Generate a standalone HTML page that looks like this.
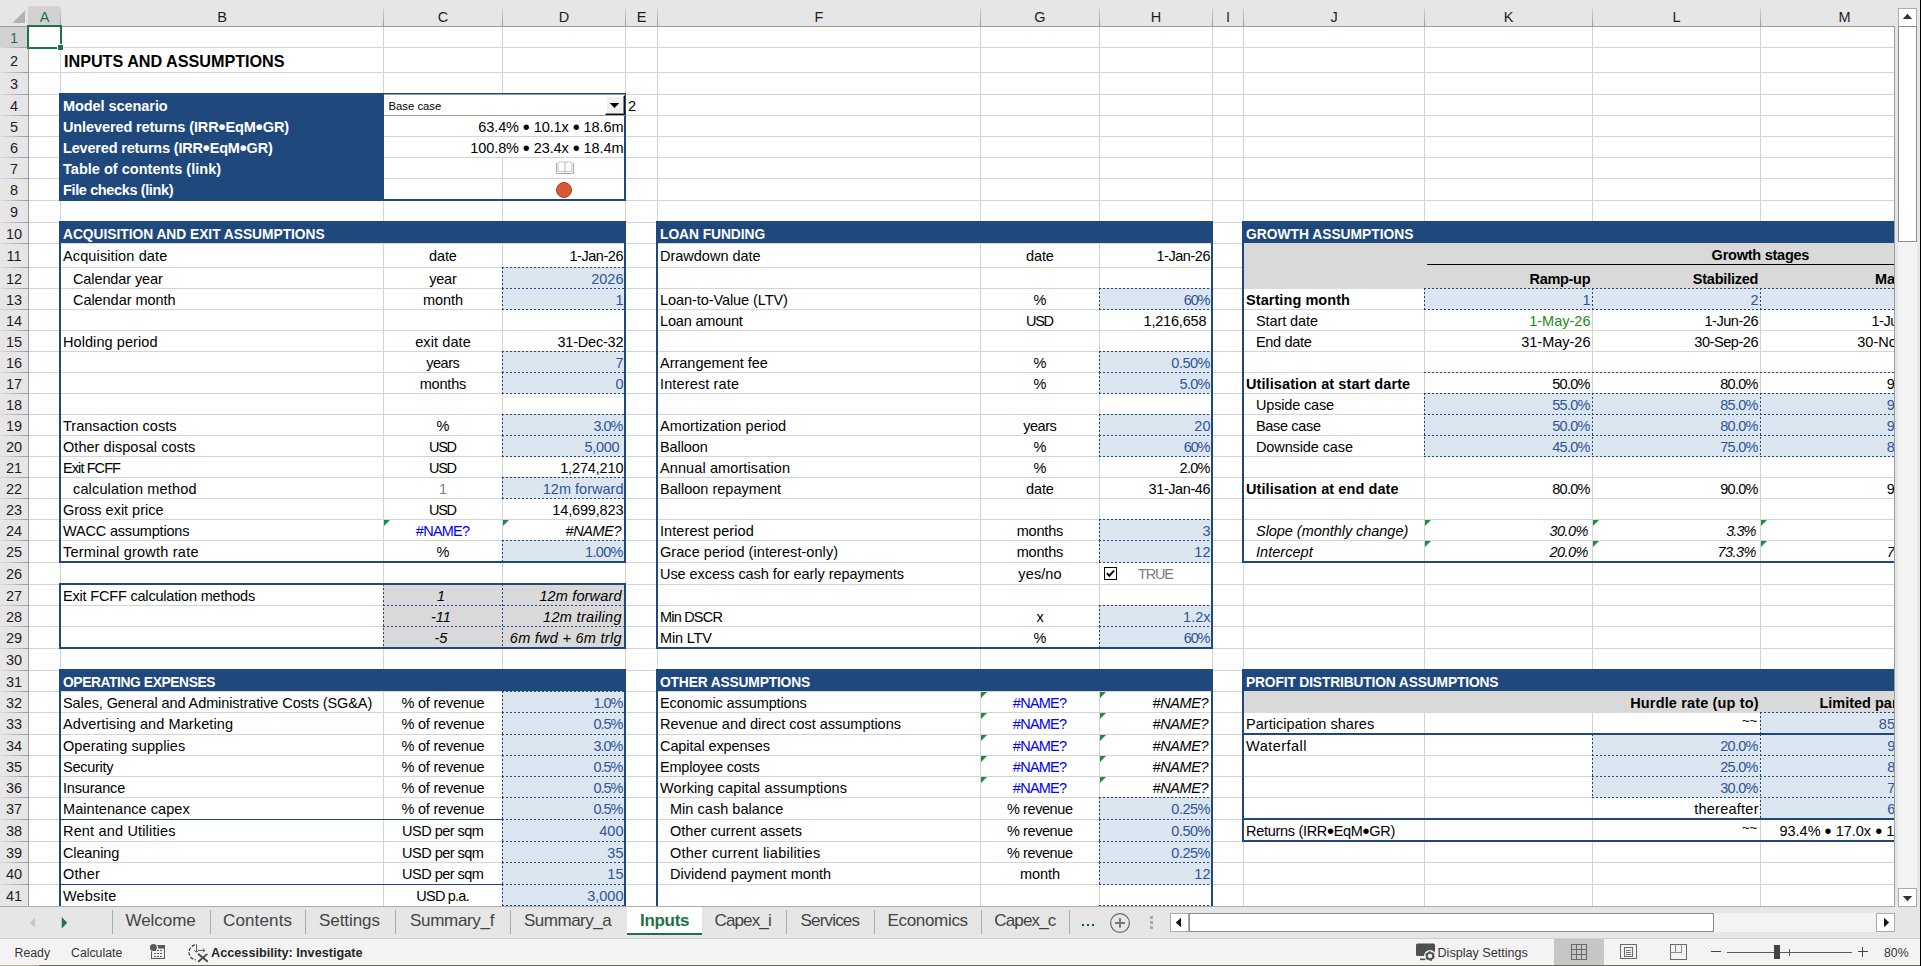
<!DOCTYPE html>
<html><head><meta charset="utf-8"><title>Inputs</title><style>
html,body{margin:0;padding:0;}
body{width:1921px;height:966px;position:relative;overflow:hidden;background:#fff;font-family:"Liberation Sans",sans-serif;font-size:14.5px;color:#000;}
#sheet{position:absolute;left:0;top:0;width:1894px;height:906px;overflow:hidden;}
#sheet div,#sheet svg,#hd div,#hd svg,#ch div,#ch svg,#sel div{position:absolute;}
.t{line-height:18px;height:18px;white-space:pre;overflow:visible;}
.b{font-weight:bold;}
.i{font-style:italic;}
.bu{font-size:1.38em;line-height:0;position:relative;top:2px;}
</style></head>
<body>
<div id="sheet">
<div style="left:60px;top:27px;width:1px;height:879px;background:#D4D4D4;"></div>
<div style="left:383px;top:27px;width:1px;height:879px;background:#D4D4D4;"></div>
<div style="left:502px;top:27px;width:1px;height:879px;background:#D4D4D4;"></div>
<div style="left:625px;top:27px;width:1px;height:879px;background:#D4D4D4;"></div>
<div style="left:657px;top:27px;width:1px;height:879px;background:#D4D4D4;"></div>
<div style="left:980px;top:27px;width:1px;height:879px;background:#D4D4D4;"></div>
<div style="left:1099px;top:27px;width:1px;height:879px;background:#D4D4D4;"></div>
<div style="left:1212px;top:27px;width:1px;height:879px;background:#D4D4D4;"></div>
<div style="left:1243px;top:27px;width:1px;height:879px;background:#D4D4D4;"></div>
<div style="left:1424px;top:27px;width:1px;height:879px;background:#D4D4D4;"></div>
<div style="left:1592px;top:27px;width:1px;height:879px;background:#D4D4D4;"></div>
<div style="left:1760px;top:27px;width:1px;height:879px;background:#D4D4D4;"></div>
<div style="left:29px;top:47px;width:1865px;height:1px;background:#D4D4D4;"></div>
<div style="left:29px;top:72px;width:1865px;height:1px;background:#D4D4D4;"></div>
<div style="left:29px;top:94px;width:1865px;height:1px;background:#D4D4D4;"></div>
<div style="left:29px;top:115px;width:1865px;height:1px;background:#D4D4D4;"></div>
<div style="left:29px;top:136px;width:1865px;height:1px;background:#D4D4D4;"></div>
<div style="left:29px;top:157px;width:1865px;height:1px;background:#D4D4D4;"></div>
<div style="left:29px;top:178px;width:1865px;height:1px;background:#D4D4D4;"></div>
<div style="left:29px;top:200px;width:1865px;height:1px;background:#D4D4D4;"></div>
<div style="left:29px;top:222px;width:1865px;height:1px;background:#D4D4D4;"></div>
<div style="left:29px;top:243px;width:1865px;height:1px;background:#D4D4D4;"></div>
<div style="left:29px;top:267px;width:1865px;height:1px;background:#D4D4D4;"></div>
<div style="left:29px;top:288px;width:1865px;height:1px;background:#D4D4D4;"></div>
<div style="left:29px;top:309px;width:1865px;height:1px;background:#D4D4D4;"></div>
<div style="left:29px;top:330px;width:1865px;height:1px;background:#D4D4D4;"></div>
<div style="left:29px;top:351px;width:1865px;height:1px;background:#D4D4D4;"></div>
<div style="left:29px;top:372px;width:1865px;height:1px;background:#D4D4D4;"></div>
<div style="left:29px;top:393px;width:1865px;height:1px;background:#D4D4D4;"></div>
<div style="left:29px;top:414px;width:1865px;height:1px;background:#D4D4D4;"></div>
<div style="left:29px;top:435px;width:1865px;height:1px;background:#D4D4D4;"></div>
<div style="left:29px;top:456px;width:1865px;height:1px;background:#D4D4D4;"></div>
<div style="left:29px;top:477px;width:1865px;height:1px;background:#D4D4D4;"></div>
<div style="left:29px;top:498px;width:1865px;height:1px;background:#D4D4D4;"></div>
<div style="left:29px;top:519px;width:1865px;height:1px;background:#D4D4D4;"></div>
<div style="left:29px;top:540px;width:1865px;height:1px;background:#D4D4D4;"></div>
<div style="left:29px;top:562px;width:1865px;height:1px;background:#D4D4D4;"></div>
<div style="left:29px;top:584px;width:1865px;height:1px;background:#D4D4D4;"></div>
<div style="left:29px;top:605px;width:1865px;height:1px;background:#D4D4D4;"></div>
<div style="left:29px;top:626px;width:1865px;height:1px;background:#D4D4D4;"></div>
<div style="left:29px;top:648px;width:1865px;height:1px;background:#D4D4D4;"></div>
<div style="left:29px;top:670px;width:1865px;height:1px;background:#D4D4D4;"></div>
<div style="left:29px;top:691px;width:1865px;height:1px;background:#D4D4D4;"></div>
<div style="left:29px;top:712px;width:1865px;height:1px;background:#D4D4D4;"></div>
<div style="left:29px;top:734px;width:1865px;height:1px;background:#D4D4D4;"></div>
<div style="left:29px;top:755px;width:1865px;height:1px;background:#D4D4D4;"></div>
<div style="left:29px;top:776px;width:1865px;height:1px;background:#D4D4D4;"></div>
<div style="left:29px;top:797px;width:1865px;height:1px;background:#D4D4D4;"></div>
<div style="left:29px;top:819px;width:1865px;height:1px;background:#D4D4D4;"></div>
<div style="left:29px;top:841px;width:1865px;height:1px;background:#D4D4D4;"></div>
<div style="left:29px;top:862px;width:1865px;height:1px;background:#D4D4D4;"></div>
<div style="left:29px;top:884px;width:1865px;height:1px;background:#D4D4D4;"></div>
<div style="left:59px;top:93px;width:325px;height:108px;background:#1F497D;"></div>
<div style="left:384px;top:95px;width:240px;height:104px;background:#fff;"></div>
<div style="left:384px;top:115px;width:240px;height:1px;background:#D4D4D4;"></div>
<div style="left:384px;top:136px;width:240px;height:1px;background:#D4D4D4;"></div>
<div style="left:384px;top:157px;width:240px;height:1px;background:#D4D4D4;"></div>
<div style="left:384px;top:178px;width:240px;height:1px;background:#D4D4D4;"></div>
<div style="left:502px;top:158px;width:1px;height:41px;background:#D4D4D4;"></div>
<div style="left:384px;top:93px;width:242px;height:2px;background:#1F497D;"></div>
<div style="left:624px;top:93px;width:2px;height:108px;background:#1F497D;"></div>
<div style="left:384px;top:199px;width:242px;height:2px;background:#1F497D;"></div>
<div class="t b" style="left:63.00px;top:96.98px;width:600px;text-align:left;color:#fff;letter-spacing:-0.065px;">Model scenario</div>
<div class="t b" style="left:63.00px;top:117.98px;width:600px;text-align:left;color:#fff;letter-spacing:-0.106px;">Unlevered returns (IRR<span class="bu">•</span>EqM<span class="bu">•</span>GR)</div>
<div class="t b" style="left:63.00px;top:138.98px;width:600px;text-align:left;color:#fff;letter-spacing:-0.179px;">Levered returns (IRR<span class="bu">•</span>EqM<span class="bu">•</span>GR)</div>
<div class="t b" style="left:63.00px;top:159.98px;width:600px;text-align:left;color:#fff;letter-spacing:0.018px;">Table of contents (link)</div>
<div class="t b" style="left:63.00px;top:180.98px;width:600px;text-align:left;color:#fff;letter-spacing:-0.372px;">File checks (link)</div>
<div class="t " style="left:223.41px;top:117.98px;width:400px;text-align:right;letter-spacing:-0.091px;">63.4% <span class="bu">•</span> 10.1x <span class="bu">•</span> 18.6m</div>
<div class="t " style="left:223.41px;top:138.98px;width:400px;text-align:right;letter-spacing:-0.090px;">100.8% <span class="bu">•</span> 23.4x <span class="bu">•</span> 18.4m</div>
<div class="t " style="left:628.00px;top:96.98px;width:600px;text-align:left;">2</div>
<div style="left:384px;top:94px;width:241px;height:1px;background:#98A1B0;"></div>
<div style="left:384px;top:95px;width:241px;height:20px;background:#fff;"></div>
<div style="left:384px;top:115px;width:241px;height:1px;background:#A0A0A0;"></div>
<div style="left:605px;top:95px;width:20px;height:20px;background:#F0F0F0;border-right:1px solid #111;border-bottom:1px solid #111;border-left:1px solid #fff;border-top:1px solid #fff;box-sizing:border-box;box-shadow:inset -1px -1px 0 #8A8A8A, inset 1px 1px 0 #fff;"></div>
<svg style="left:609px;top:102px" width="11" height="7" viewBox="0 0 11 7"><path d="M0.7 1 L10.3 1 L5.5 6 Z" fill="#000"/></svg>
<div class="t " style="left:388.50px;top:96.58px;width:200px;text-align:left;font-size:11.3px;">Base case</div>
<svg style="left:555px;top:160px" width="20" height="16" viewBox="0 0 20 16">
<path d="M1.5 3 V13.5 H18.5 V3" fill="none" stroke="#B4B4B4" stroke-width="1.2"/>
<path d="M3 11.5 V2.6 Q6.5 0.6 10 2.6 Q13.5 0.6 17 2.6 V11.5 Q13.5 10.6 10 12 Q6.5 10.6 3 11.5 Z" fill="#fff" stroke="#C4C4C4" stroke-width="1"/>
<path d="M10 2.6 V12" stroke="#D9A8A8" stroke-width="1"/>
<path d="M5 13.5 H15" stroke="#A8A8A8" stroke-width="1.2"/></svg>
<div style="left:556px;top:182px;width:16px;height:16px;box-sizing:border-box;border-radius:50%;background:#D85933;border:1px solid #A9431F;"></div>
<div style="left:59px;top:221px;width:567px;height:22px;background:#1F497D;"></div>
<div class="t b" style="left:63.00px;top:226.22px;width:700px;text-align:left;color:#fff;font-size:13.8px;letter-spacing:-0.031px;">ACQUISITION AND EXIT ASSUMPTIONS</div>
<div style="left:503px;top:268px;width:123px;height:21px;background:#DCE6F1;"></div>
<div style="left:502px;top:267px;width:124px;height:1px;background:repeating-linear-gradient(90deg,#1F497D 0 2px,transparent 2px 4px);"></div>
<div style="left:502px;top:288px;width:124px;height:1px;background:repeating-linear-gradient(90deg,#1F497D 0 2px,transparent 2px 4px);"></div>
<div style="left:502px;top:267px;width:1px;height:22px;background:repeating-linear-gradient(180deg,#1F497D 0 2px,transparent 2px 4px);"></div>
<div style="left:625px;top:267px;width:1px;height:22px;background:repeating-linear-gradient(180deg,#1F497D 0 2px,transparent 2px 4px);"></div>
<div style="left:503px;top:289px;width:123px;height:21px;background:#DCE6F1;"></div>
<div style="left:502px;top:288px;width:124px;height:1px;background:repeating-linear-gradient(90deg,#1F497D 0 2px,transparent 2px 4px);"></div>
<div style="left:502px;top:309px;width:124px;height:1px;background:repeating-linear-gradient(90deg,#1F497D 0 2px,transparent 2px 4px);"></div>
<div style="left:502px;top:288px;width:1px;height:22px;background:repeating-linear-gradient(180deg,#1F497D 0 2px,transparent 2px 4px);"></div>
<div style="left:625px;top:288px;width:1px;height:22px;background:repeating-linear-gradient(180deg,#1F497D 0 2px,transparent 2px 4px);"></div>
<div style="left:503px;top:352px;width:123px;height:21px;background:#DCE6F1;"></div>
<div style="left:502px;top:351px;width:124px;height:1px;background:repeating-linear-gradient(90deg,#1F497D 0 2px,transparent 2px 4px);"></div>
<div style="left:502px;top:372px;width:124px;height:1px;background:repeating-linear-gradient(90deg,#1F497D 0 2px,transparent 2px 4px);"></div>
<div style="left:502px;top:351px;width:1px;height:22px;background:repeating-linear-gradient(180deg,#1F497D 0 2px,transparent 2px 4px);"></div>
<div style="left:625px;top:351px;width:1px;height:22px;background:repeating-linear-gradient(180deg,#1F497D 0 2px,transparent 2px 4px);"></div>
<div style="left:503px;top:373px;width:123px;height:21px;background:#DCE6F1;"></div>
<div style="left:502px;top:372px;width:124px;height:1px;background:repeating-linear-gradient(90deg,#1F497D 0 2px,transparent 2px 4px);"></div>
<div style="left:502px;top:393px;width:124px;height:1px;background:repeating-linear-gradient(90deg,#1F497D 0 2px,transparent 2px 4px);"></div>
<div style="left:502px;top:372px;width:1px;height:22px;background:repeating-linear-gradient(180deg,#1F497D 0 2px,transparent 2px 4px);"></div>
<div style="left:625px;top:372px;width:1px;height:22px;background:repeating-linear-gradient(180deg,#1F497D 0 2px,transparent 2px 4px);"></div>
<div style="left:503px;top:415px;width:123px;height:21px;background:#DCE6F1;"></div>
<div style="left:502px;top:414px;width:124px;height:1px;background:repeating-linear-gradient(90deg,#1F497D 0 2px,transparent 2px 4px);"></div>
<div style="left:502px;top:435px;width:124px;height:1px;background:repeating-linear-gradient(90deg,#1F497D 0 2px,transparent 2px 4px);"></div>
<div style="left:502px;top:414px;width:1px;height:22px;background:repeating-linear-gradient(180deg,#1F497D 0 2px,transparent 2px 4px);"></div>
<div style="left:625px;top:414px;width:1px;height:22px;background:repeating-linear-gradient(180deg,#1F497D 0 2px,transparent 2px 4px);"></div>
<div style="left:503px;top:436px;width:123px;height:21px;background:#DCE6F1;"></div>
<div style="left:502px;top:435px;width:124px;height:1px;background:repeating-linear-gradient(90deg,#1F497D 0 2px,transparent 2px 4px);"></div>
<div style="left:502px;top:456px;width:124px;height:1px;background:repeating-linear-gradient(90deg,#1F497D 0 2px,transparent 2px 4px);"></div>
<div style="left:502px;top:435px;width:1px;height:22px;background:repeating-linear-gradient(180deg,#1F497D 0 2px,transparent 2px 4px);"></div>
<div style="left:625px;top:435px;width:1px;height:22px;background:repeating-linear-gradient(180deg,#1F497D 0 2px,transparent 2px 4px);"></div>
<div style="left:503px;top:478px;width:123px;height:21px;background:#DCE6F1;"></div>
<div style="left:502px;top:477px;width:124px;height:1px;background:repeating-linear-gradient(90deg,#1F497D 0 2px,transparent 2px 4px);"></div>
<div style="left:502px;top:498px;width:124px;height:1px;background:repeating-linear-gradient(90deg,#1F497D 0 2px,transparent 2px 4px);"></div>
<div style="left:502px;top:477px;width:1px;height:22px;background:repeating-linear-gradient(180deg,#1F497D 0 2px,transparent 2px 4px);"></div>
<div style="left:625px;top:477px;width:1px;height:22px;background:repeating-linear-gradient(180deg,#1F497D 0 2px,transparent 2px 4px);"></div>
<div style="left:503px;top:541px;width:123px;height:22px;background:#DCE6F1;"></div>
<div style="left:502px;top:540px;width:124px;height:1px;background:repeating-linear-gradient(90deg,#1F497D 0 2px,transparent 2px 4px);"></div>
<div style="left:502px;top:562px;width:124px;height:1px;background:repeating-linear-gradient(90deg,#1F497D 0 2px,transparent 2px 4px);"></div>
<div style="left:502px;top:540px;width:1px;height:23px;background:repeating-linear-gradient(180deg,#1F497D 0 2px,transparent 2px 4px);"></div>
<div style="left:625px;top:540px;width:1px;height:23px;background:repeating-linear-gradient(180deg,#1F497D 0 2px,transparent 2px 4px);"></div>
<div class="t " style="left:63.00px;top:246.98px;width:600px;text-align:left;letter-spacing:0.123px;">Acquisition date</div>
<div class="t " style="left:242.92px;top:246.98px;width:400px;text-align:center;letter-spacing:-0.152px;">date</div>
<div class="t " style="left:223.03px;top:246.98px;width:400px;text-align:right;letter-spacing:-0.466px;">1-Jan-26</div>
<div class="t " style="left:73.00px;top:269.98px;width:600px;text-align:left;letter-spacing:-0.108px;">Calendar year</div>
<div class="t " style="left:242.89px;top:269.98px;width:400px;text-align:center;letter-spacing:-0.226px;">year</div>
<div class="t " style="left:223.50px;top:269.98px;width:400px;text-align:right;color:#2F5597;">2026</div>
<div class="t " style="left:73.00px;top:290.98px;width:600px;text-align:left;letter-spacing:-0.054px;">Calendar month</div>
<div class="t " style="left:242.96px;top:290.98px;width:400px;text-align:center;letter-spacing:-0.084px;">month</div>
<div class="t " style="left:223.50px;top:290.98px;width:400px;text-align:right;color:#2F5597;">1</div>
<div class="t " style="left:63.00px;top:332.98px;width:600px;text-align:left;letter-spacing:0.074px;">Holding period</div>
<div class="t " style="left:243.05px;top:332.98px;width:400px;text-align:center;letter-spacing:0.106px;">exit date</div>
<div class="t " style="left:223.28px;top:332.98px;width:400px;text-align:right;letter-spacing:-0.217px;">31-Dec-32</div>
<div class="t " style="left:242.77px;top:353.98px;width:400px;text-align:center;letter-spacing:-0.452px;">years</div>
<div class="t " style="left:223.50px;top:353.98px;width:400px;text-align:right;color:#2F5597;">7</div>
<div class="t " style="left:242.92px;top:374.98px;width:400px;text-align:center;letter-spacing:-0.170px;">months</div>
<div class="t " style="left:223.50px;top:374.98px;width:400px;text-align:right;color:#2F5597;">0</div>
<div class="t " style="left:63.00px;top:416.98px;width:600px;text-align:left;letter-spacing:0.023px;">Transaction costs</div>
<div class="t " style="left:243.00px;top:416.98px;width:400px;text-align:center;">%</div>
<div class="t " style="left:222.45px;top:416.98px;width:400px;text-align:right;color:#2F5597;letter-spacing:-1.052px;">3.0%</div>
<div class="t " style="left:63.00px;top:437.98px;width:600px;text-align:left;letter-spacing:0.044px;">Other disposal costs</div>
<div class="t " style="left:242.40px;top:437.98px;width:400px;text-align:center;letter-spacing:-1.200px;">USD</div>
<div class="t " style="left:222.84px;top:437.98px;width:400px;text-align:right;color:#2F5597;letter-spacing:-0.330px;">5,000 </div>
<div class="t " style="left:63.00px;top:458.98px;width:600px;text-align:left;letter-spacing:-0.911px;">Exit FCFF</div>
<div class="t " style="left:242.40px;top:458.98px;width:400px;text-align:center;letter-spacing:-1.200px;">USD</div>
<div class="t " style="left:223.34px;top:458.98px;width:400px;text-align:right;letter-spacing:-0.155px;">1,274,210</div>
<div class="t " style="left:73.00px;top:479.98px;width:600px;text-align:left;letter-spacing:0.151px;">calculation method</div>
<div class="t " style="left:243.00px;top:479.98px;width:400px;text-align:center;color:#808080;">1</div>
<div class="t " style="left:223.52px;top:479.98px;width:400px;text-align:right;color:#2F5597;letter-spacing:0.018px;">12m forward</div>
<div class="t " style="left:63.00px;top:500.98px;width:600px;text-align:left;letter-spacing:-0.017px;">Gross exit price</div>
<div class="t " style="left:242.40px;top:500.98px;width:400px;text-align:center;letter-spacing:-1.200px;">USD</div>
<div class="t " style="left:223.34px;top:500.98px;width:400px;text-align:right;letter-spacing:-0.156px;">14,699,823</div>
<div class="t " style="left:63.00px;top:521.98px;width:600px;text-align:left;letter-spacing:-0.183px;">WACC assumptions</div>
<div class="t " style="left:242.62px;top:521.98px;width:400px;text-align:center;color:#0000FF;letter-spacing:-0.752px;">#NAME?</div>
<div class="t i" style="left:224.68px;top:521.98px;width:400px;text-align:right;letter-spacing:-0.412px;">#NAME? </div>
<div style="left:384px;top:520px;width:0;height:0;border-top:6px solid #1E8E3E;border-right:6px solid transparent;"></div>
<div style="left:503px;top:520px;width:0;height:0;border-top:6px solid #1E8E3E;border-right:6px solid transparent;"></div>
<div class="t " style="left:63.00px;top:542.98px;width:600px;text-align:left;letter-spacing:0.216px;">Terminal growth rate</div>
<div class="t " style="left:243.00px;top:542.98px;width:400px;text-align:center;">%</div>
<div class="t " style="left:222.84px;top:542.98px;width:400px;text-align:right;color:#2F5597;letter-spacing:-0.655px;">1.00%</div>
<div style="left:59px;top:561px;width:567px;height:2px;background:#1F497D;"></div>
<div style="left:59px;top:242px;width:2px;height:321px;background:#1F497D;"></div>
<div style="left:624px;top:242px;width:2px;height:321px;background:#1F497D;"></div>
<div style="left:384px;top:585px;width:242px;height:64px;background:#D9D9D9;"></div>
<div style="left:383px;top:584px;width:243px;height:1px;background:repeating-linear-gradient(90deg,#1F497D 0 2px,transparent 2px 4px);"></div>
<div style="left:383px;top:605px;width:243px;height:1px;background:repeating-linear-gradient(90deg,#1F497D 0 2px,transparent 2px 4px);"></div>
<div style="left:383px;top:626px;width:243px;height:1px;background:repeating-linear-gradient(90deg,#1F497D 0 2px,transparent 2px 4px);"></div>
<div style="left:383px;top:648px;width:243px;height:1px;background:repeating-linear-gradient(90deg,#1F497D 0 2px,transparent 2px 4px);"></div>
<div style="left:383px;top:584px;width:1px;height:65px;background:repeating-linear-gradient(180deg,#1F497D 0 2px,transparent 2px 4px);"></div>
<div style="left:502px;top:584px;width:1px;height:65px;background:repeating-linear-gradient(180deg,#1F497D 0 2px,transparent 2px 4px);"></div>
<div style="left:625px;top:584px;width:1px;height:65px;background:repeating-linear-gradient(180deg,#1F497D 0 2px,transparent 2px 4px);"></div>
<div class="t " style="left:63.00px;top:586.98px;width:600px;text-align:left;letter-spacing:-0.187px;">Exit FCFF calculation methods</div>
<div class="t i" style="left:243.00px;top:586.98px;width:400px;text-align:center;">1 </div>
<div class="t i" style="left:225.80px;top:586.98px;width:400px;text-align:right;letter-spacing:0.148px;">12m forward </div>
<div class="t i" style="left:243.00px;top:607.98px;width:400px;text-align:center;">-11 </div>
<div class="t i" style="left:226.12px;top:607.98px;width:400px;text-align:right;letter-spacing:0.311px;">12m trailing </div>
<div class="t i" style="left:243.00px;top:628.98px;width:400px;text-align:center;">-5 </div>
<div class="t i" style="left:226.05px;top:628.98px;width:400px;text-align:right;letter-spacing:0.273px;">6m fwd + 6m trlg </div>
<div style="left:59px;top:583px;width:567px;height:2px;background:#1F497D;"></div>
<div style="left:59px;top:647px;width:567px;height:2px;background:#1F497D;"></div>
<div style="left:59px;top:583px;width:2px;height:66px;background:#1F497D;"></div>
<div style="left:624px;top:583px;width:2px;height:66px;background:#1F497D;"></div>
<div style="left:59px;top:669px;width:567px;height:22px;background:#1F497D;"></div>
<div class="t b" style="left:63.00px;top:674.22px;width:700px;text-align:left;color:#fff;font-size:13.8px;letter-spacing:-0.397px;">OPERATING EXPENSES</div>
<div style="left:61px;top:819px;width:442px;height:1px;background:#1F497D;"></div>
<div style="left:61px;top:884px;width:442px;height:1px;background:#1F497D;"></div>
<div style="left:503px;top:692px;width:123px;height:21px;background:#DCE6F1;"></div>
<div style="left:502px;top:691px;width:124px;height:1px;background:repeating-linear-gradient(90deg,#1F497D 0 2px,transparent 2px 4px);"></div>
<div style="left:502px;top:712px;width:124px;height:1px;background:repeating-linear-gradient(90deg,#1F497D 0 2px,transparent 2px 4px);"></div>
<div style="left:502px;top:691px;width:1px;height:22px;background:repeating-linear-gradient(180deg,#1F497D 0 2px,transparent 2px 4px);"></div>
<div style="left:625px;top:691px;width:1px;height:22px;background:repeating-linear-gradient(180deg,#1F497D 0 2px,transparent 2px 4px);"></div>
<div style="left:503px;top:713px;width:123px;height:22px;background:#DCE6F1;"></div>
<div style="left:502px;top:712px;width:124px;height:1px;background:repeating-linear-gradient(90deg,#1F497D 0 2px,transparent 2px 4px);"></div>
<div style="left:502px;top:734px;width:124px;height:1px;background:repeating-linear-gradient(90deg,#1F497D 0 2px,transparent 2px 4px);"></div>
<div style="left:502px;top:712px;width:1px;height:23px;background:repeating-linear-gradient(180deg,#1F497D 0 2px,transparent 2px 4px);"></div>
<div style="left:625px;top:712px;width:1px;height:23px;background:repeating-linear-gradient(180deg,#1F497D 0 2px,transparent 2px 4px);"></div>
<div style="left:503px;top:735px;width:123px;height:21px;background:#DCE6F1;"></div>
<div style="left:502px;top:734px;width:124px;height:1px;background:repeating-linear-gradient(90deg,#1F497D 0 2px,transparent 2px 4px);"></div>
<div style="left:502px;top:755px;width:124px;height:1px;background:repeating-linear-gradient(90deg,#1F497D 0 2px,transparent 2px 4px);"></div>
<div style="left:502px;top:734px;width:1px;height:22px;background:repeating-linear-gradient(180deg,#1F497D 0 2px,transparent 2px 4px);"></div>
<div style="left:625px;top:734px;width:1px;height:22px;background:repeating-linear-gradient(180deg,#1F497D 0 2px,transparent 2px 4px);"></div>
<div style="left:503px;top:756px;width:123px;height:21px;background:#DCE6F1;"></div>
<div style="left:502px;top:755px;width:124px;height:1px;background:repeating-linear-gradient(90deg,#1F497D 0 2px,transparent 2px 4px);"></div>
<div style="left:502px;top:776px;width:124px;height:1px;background:repeating-linear-gradient(90deg,#1F497D 0 2px,transparent 2px 4px);"></div>
<div style="left:502px;top:755px;width:1px;height:22px;background:repeating-linear-gradient(180deg,#1F497D 0 2px,transparent 2px 4px);"></div>
<div style="left:625px;top:755px;width:1px;height:22px;background:repeating-linear-gradient(180deg,#1F497D 0 2px,transparent 2px 4px);"></div>
<div style="left:503px;top:777px;width:123px;height:21px;background:#DCE6F1;"></div>
<div style="left:502px;top:776px;width:124px;height:1px;background:repeating-linear-gradient(90deg,#1F497D 0 2px,transparent 2px 4px);"></div>
<div style="left:502px;top:797px;width:124px;height:1px;background:repeating-linear-gradient(90deg,#1F497D 0 2px,transparent 2px 4px);"></div>
<div style="left:502px;top:776px;width:1px;height:22px;background:repeating-linear-gradient(180deg,#1F497D 0 2px,transparent 2px 4px);"></div>
<div style="left:625px;top:776px;width:1px;height:22px;background:repeating-linear-gradient(180deg,#1F497D 0 2px,transparent 2px 4px);"></div>
<div style="left:503px;top:798px;width:123px;height:22px;background:#DCE6F1;"></div>
<div style="left:502px;top:797px;width:124px;height:1px;background:repeating-linear-gradient(90deg,#1F497D 0 2px,transparent 2px 4px);"></div>
<div style="left:502px;top:819px;width:124px;height:1px;background:repeating-linear-gradient(90deg,#1F497D 0 2px,transparent 2px 4px);"></div>
<div style="left:502px;top:797px;width:1px;height:23px;background:repeating-linear-gradient(180deg,#1F497D 0 2px,transparent 2px 4px);"></div>
<div style="left:625px;top:797px;width:1px;height:23px;background:repeating-linear-gradient(180deg,#1F497D 0 2px,transparent 2px 4px);"></div>
<div style="left:503px;top:820px;width:123px;height:22px;background:#DCE6F1;"></div>
<div style="left:502px;top:819px;width:124px;height:1px;background:repeating-linear-gradient(90deg,#1F497D 0 2px,transparent 2px 4px);"></div>
<div style="left:502px;top:841px;width:124px;height:1px;background:repeating-linear-gradient(90deg,#1F497D 0 2px,transparent 2px 4px);"></div>
<div style="left:502px;top:819px;width:1px;height:23px;background:repeating-linear-gradient(180deg,#1F497D 0 2px,transparent 2px 4px);"></div>
<div style="left:625px;top:819px;width:1px;height:23px;background:repeating-linear-gradient(180deg,#1F497D 0 2px,transparent 2px 4px);"></div>
<div style="left:503px;top:842px;width:123px;height:21px;background:#DCE6F1;"></div>
<div style="left:502px;top:841px;width:124px;height:1px;background:repeating-linear-gradient(90deg,#1F497D 0 2px,transparent 2px 4px);"></div>
<div style="left:502px;top:862px;width:124px;height:1px;background:repeating-linear-gradient(90deg,#1F497D 0 2px,transparent 2px 4px);"></div>
<div style="left:502px;top:841px;width:1px;height:22px;background:repeating-linear-gradient(180deg,#1F497D 0 2px,transparent 2px 4px);"></div>
<div style="left:625px;top:841px;width:1px;height:22px;background:repeating-linear-gradient(180deg,#1F497D 0 2px,transparent 2px 4px);"></div>
<div style="left:503px;top:863px;width:123px;height:22px;background:#DCE6F1;"></div>
<div style="left:502px;top:862px;width:124px;height:1px;background:repeating-linear-gradient(90deg,#1F497D 0 2px,transparent 2px 4px);"></div>
<div style="left:502px;top:884px;width:124px;height:1px;background:repeating-linear-gradient(90deg,#1F497D 0 2px,transparent 2px 4px);"></div>
<div style="left:502px;top:862px;width:1px;height:23px;background:repeating-linear-gradient(180deg,#1F497D 0 2px,transparent 2px 4px);"></div>
<div style="left:625px;top:862px;width:1px;height:23px;background:repeating-linear-gradient(180deg,#1F497D 0 2px,transparent 2px 4px);"></div>
<div style="left:503px;top:885px;width:123px;height:21px;background:#DCE6F1;"></div>
<div style="left:502px;top:884px;width:124px;height:1px;background:repeating-linear-gradient(90deg,#1F497D 0 2px,transparent 2px 4px);"></div>
<div style="left:502px;top:905px;width:124px;height:1px;background:repeating-linear-gradient(90deg,#1F497D 0 2px,transparent 2px 4px);"></div>
<div style="left:502px;top:884px;width:1px;height:22px;background:repeating-linear-gradient(180deg,#1F497D 0 2px,transparent 2px 4px);"></div>
<div style="left:625px;top:884px;width:1px;height:22px;background:repeating-linear-gradient(180deg,#1F497D 0 2px,transparent 2px 4px);"></div>
<div class="t " style="left:63.00px;top:693.98px;width:600px;text-align:left;letter-spacing:-0.094px;">Sales, General and Administrative Costs (SG&amp;A)</div>
<div class="t " style="left:242.90px;top:693.98px;width:400px;text-align:center;letter-spacing:-0.207px;">% of revenue</div>
<div class="t " style="left:222.45px;top:693.98px;width:400px;text-align:right;color:#2F5597;letter-spacing:-1.052px;">1.0%</div>
<div class="t " style="left:63.00px;top:714.98px;width:600px;text-align:left;letter-spacing:0.097px;">Advertising and Marketing</div>
<div class="t " style="left:242.90px;top:714.98px;width:400px;text-align:center;letter-spacing:-0.207px;">% of revenue</div>
<div class="t " style="left:222.45px;top:714.98px;width:400px;text-align:right;color:#2F5597;letter-spacing:-1.052px;">0.5%</div>
<div class="t " style="left:63.00px;top:736.98px;width:600px;text-align:left;letter-spacing:0.076px;">Operating supplies</div>
<div class="t " style="left:242.90px;top:736.98px;width:400px;text-align:center;letter-spacing:-0.207px;">% of revenue</div>
<div class="t " style="left:222.45px;top:736.98px;width:400px;text-align:right;color:#2F5597;letter-spacing:-1.052px;">3.0%</div>
<div class="t " style="left:63.00px;top:757.98px;width:600px;text-align:left;letter-spacing:-0.275px;">Security</div>
<div class="t " style="left:242.90px;top:757.98px;width:400px;text-align:center;letter-spacing:-0.207px;">% of revenue</div>
<div class="t " style="left:222.45px;top:757.98px;width:400px;text-align:right;color:#2F5597;letter-spacing:-1.052px;">0.5%</div>
<div class="t " style="left:63.00px;top:778.98px;width:600px;text-align:left;letter-spacing:-0.183px;">Insurance</div>
<div class="t " style="left:242.90px;top:778.98px;width:400px;text-align:center;letter-spacing:-0.207px;">% of revenue</div>
<div class="t " style="left:222.45px;top:778.98px;width:400px;text-align:right;color:#2F5597;letter-spacing:-1.052px;">0.5%</div>
<div class="t " style="left:63.00px;top:799.98px;width:600px;text-align:left;letter-spacing:0.060px;">Maintenance capex</div>
<div class="t " style="left:242.90px;top:799.98px;width:400px;text-align:center;letter-spacing:-0.207px;">% of revenue</div>
<div class="t " style="left:222.45px;top:799.98px;width:400px;text-align:right;color:#2F5597;letter-spacing:-1.052px;">0.5%</div>
<div class="t " style="left:63.00px;top:821.98px;width:600px;text-align:left;letter-spacing:0.167px;">Rent and Utilities</div>
<div class="t " style="left:242.74px;top:821.98px;width:400px;text-align:center;letter-spacing:-0.524px;">USD per sqm</div>
<div class="t " style="left:223.50px;top:821.98px;width:400px;text-align:right;color:#2F5597;">400</div>
<div class="t " style="left:63.00px;top:843.98px;width:600px;text-align:left;letter-spacing:-0.146px;">Cleaning</div>
<div class="t " style="left:242.74px;top:843.98px;width:400px;text-align:center;letter-spacing:-0.524px;">USD per sqm</div>
<div class="t " style="left:223.50px;top:843.98px;width:400px;text-align:right;color:#2F5597;">35</div>
<div class="t " style="left:63.00px;top:864.98px;width:600px;text-align:left;letter-spacing:0.129px;">Other</div>
<div class="t " style="left:242.74px;top:864.98px;width:400px;text-align:center;letter-spacing:-0.524px;">USD per sqm</div>
<div class="t " style="left:223.50px;top:864.98px;width:400px;text-align:right;color:#2F5597;">15</div>
<div class="t " style="left:63.00px;top:886.98px;width:600px;text-align:left;letter-spacing:0.183px;">Website</div>
<div class="t " style="left:242.61px;top:886.98px;width:400px;text-align:center;letter-spacing:-0.786px;">USD p.a.</div>
<div class="t " style="left:223.50px;top:886.98px;width:400px;text-align:right;color:#2F5597;">3,000</div>
<div style="left:59px;top:690px;width:2px;height:238px;background:#1F497D;"></div>
<div style="left:624px;top:690px;width:2px;height:238px;background:#1F497D;"></div>
<div style="left:656px;top:221px;width:557px;height:22px;background:#1F497D;"></div>
<div class="t b" style="left:660.00px;top:226.22px;width:700px;text-align:left;color:#fff;font-size:13.8px;letter-spacing:-0.051px;">LOAN FUNDING</div>
<div style="left:1100px;top:289px;width:113px;height:21px;background:#DCE6F1;"></div>
<div style="left:1099px;top:288px;width:114px;height:1px;background:repeating-linear-gradient(90deg,#1F497D 0 2px,transparent 2px 4px);"></div>
<div style="left:1099px;top:309px;width:114px;height:1px;background:repeating-linear-gradient(90deg,#1F497D 0 2px,transparent 2px 4px);"></div>
<div style="left:1099px;top:288px;width:1px;height:22px;background:repeating-linear-gradient(180deg,#1F497D 0 2px,transparent 2px 4px);"></div>
<div style="left:1212px;top:288px;width:1px;height:22px;background:repeating-linear-gradient(180deg,#1F497D 0 2px,transparent 2px 4px);"></div>
<div style="left:1100px;top:352px;width:113px;height:21px;background:#DCE6F1;"></div>
<div style="left:1099px;top:351px;width:114px;height:1px;background:repeating-linear-gradient(90deg,#1F497D 0 2px,transparent 2px 4px);"></div>
<div style="left:1099px;top:372px;width:114px;height:1px;background:repeating-linear-gradient(90deg,#1F497D 0 2px,transparent 2px 4px);"></div>
<div style="left:1099px;top:351px;width:1px;height:22px;background:repeating-linear-gradient(180deg,#1F497D 0 2px,transparent 2px 4px);"></div>
<div style="left:1212px;top:351px;width:1px;height:22px;background:repeating-linear-gradient(180deg,#1F497D 0 2px,transparent 2px 4px);"></div>
<div style="left:1100px;top:373px;width:113px;height:21px;background:#DCE6F1;"></div>
<div style="left:1099px;top:372px;width:114px;height:1px;background:repeating-linear-gradient(90deg,#1F497D 0 2px,transparent 2px 4px);"></div>
<div style="left:1099px;top:393px;width:114px;height:1px;background:repeating-linear-gradient(90deg,#1F497D 0 2px,transparent 2px 4px);"></div>
<div style="left:1099px;top:372px;width:1px;height:22px;background:repeating-linear-gradient(180deg,#1F497D 0 2px,transparent 2px 4px);"></div>
<div style="left:1212px;top:372px;width:1px;height:22px;background:repeating-linear-gradient(180deg,#1F497D 0 2px,transparent 2px 4px);"></div>
<div style="left:1100px;top:415px;width:113px;height:21px;background:#DCE6F1;"></div>
<div style="left:1099px;top:414px;width:114px;height:1px;background:repeating-linear-gradient(90deg,#1F497D 0 2px,transparent 2px 4px);"></div>
<div style="left:1099px;top:435px;width:114px;height:1px;background:repeating-linear-gradient(90deg,#1F497D 0 2px,transparent 2px 4px);"></div>
<div style="left:1099px;top:414px;width:1px;height:22px;background:repeating-linear-gradient(180deg,#1F497D 0 2px,transparent 2px 4px);"></div>
<div style="left:1212px;top:414px;width:1px;height:22px;background:repeating-linear-gradient(180deg,#1F497D 0 2px,transparent 2px 4px);"></div>
<div style="left:1100px;top:436px;width:113px;height:21px;background:#DCE6F1;"></div>
<div style="left:1099px;top:435px;width:114px;height:1px;background:repeating-linear-gradient(90deg,#1F497D 0 2px,transparent 2px 4px);"></div>
<div style="left:1099px;top:456px;width:114px;height:1px;background:repeating-linear-gradient(90deg,#1F497D 0 2px,transparent 2px 4px);"></div>
<div style="left:1099px;top:435px;width:1px;height:22px;background:repeating-linear-gradient(180deg,#1F497D 0 2px,transparent 2px 4px);"></div>
<div style="left:1212px;top:435px;width:1px;height:22px;background:repeating-linear-gradient(180deg,#1F497D 0 2px,transparent 2px 4px);"></div>
<div style="left:1100px;top:520px;width:113px;height:21px;background:#DCE6F1;"></div>
<div style="left:1099px;top:519px;width:114px;height:1px;background:repeating-linear-gradient(90deg,#1F497D 0 2px,transparent 2px 4px);"></div>
<div style="left:1099px;top:540px;width:114px;height:1px;background:repeating-linear-gradient(90deg,#1F497D 0 2px,transparent 2px 4px);"></div>
<div style="left:1099px;top:519px;width:1px;height:22px;background:repeating-linear-gradient(180deg,#1F497D 0 2px,transparent 2px 4px);"></div>
<div style="left:1212px;top:519px;width:1px;height:22px;background:repeating-linear-gradient(180deg,#1F497D 0 2px,transparent 2px 4px);"></div>
<div style="left:1100px;top:541px;width:113px;height:22px;background:#DCE6F1;"></div>
<div style="left:1099px;top:540px;width:114px;height:1px;background:repeating-linear-gradient(90deg,#1F497D 0 2px,transparent 2px 4px);"></div>
<div style="left:1099px;top:562px;width:114px;height:1px;background:repeating-linear-gradient(90deg,#1F497D 0 2px,transparent 2px 4px);"></div>
<div style="left:1099px;top:540px;width:1px;height:23px;background:repeating-linear-gradient(180deg,#1F497D 0 2px,transparent 2px 4px);"></div>
<div style="left:1212px;top:540px;width:1px;height:23px;background:repeating-linear-gradient(180deg,#1F497D 0 2px,transparent 2px 4px);"></div>
<div style="left:1100px;top:606px;width:113px;height:21px;background:#DCE6F1;"></div>
<div style="left:1099px;top:605px;width:114px;height:1px;background:repeating-linear-gradient(90deg,#1F497D 0 2px,transparent 2px 4px);"></div>
<div style="left:1099px;top:626px;width:114px;height:1px;background:repeating-linear-gradient(90deg,#1F497D 0 2px,transparent 2px 4px);"></div>
<div style="left:1099px;top:605px;width:1px;height:22px;background:repeating-linear-gradient(180deg,#1F497D 0 2px,transparent 2px 4px);"></div>
<div style="left:1212px;top:605px;width:1px;height:22px;background:repeating-linear-gradient(180deg,#1F497D 0 2px,transparent 2px 4px);"></div>
<div style="left:1100px;top:627px;width:113px;height:22px;background:#DCE6F1;"></div>
<div style="left:1099px;top:626px;width:114px;height:1px;background:repeating-linear-gradient(90deg,#1F497D 0 2px,transparent 2px 4px);"></div>
<div style="left:1099px;top:648px;width:114px;height:1px;background:repeating-linear-gradient(90deg,#1F497D 0 2px,transparent 2px 4px);"></div>
<div style="left:1099px;top:626px;width:1px;height:23px;background:repeating-linear-gradient(180deg,#1F497D 0 2px,transparent 2px 4px);"></div>
<div style="left:1212px;top:626px;width:1px;height:23px;background:repeating-linear-gradient(180deg,#1F497D 0 2px,transparent 2px 4px);"></div>
<div class="t " style="left:660.00px;top:246.98px;width:600px;text-align:left;letter-spacing:-0.007px;">Drawdown date</div>
<div class="t " style="left:839.92px;top:246.98px;width:400px;text-align:center;letter-spacing:-0.152px;">date</div>
<div class="t " style="left:810.03px;top:246.98px;width:400px;text-align:right;letter-spacing:-0.466px;">1-Jan-26</div>
<div class="t " style="left:660.00px;top:290.98px;width:600px;text-align:left;letter-spacing:-0.072px;">Loan-to-Value (LTV)</div>
<div class="t " style="left:840.00px;top:290.98px;width:400px;text-align:center;">%</div>
<div class="t " style="left:809.39px;top:290.98px;width:400px;text-align:right;color:#2F5597;letter-spacing:-1.114px;">60%</div>
<div class="t " style="left:660.00px;top:311.98px;width:600px;text-align:left;letter-spacing:-0.182px;">Loan amount</div>
<div class="t " style="left:839.40px;top:311.98px;width:400px;text-align:center;letter-spacing:-1.200px;">USD</div>
<div class="t " style="left:810.09px;top:311.98px;width:400px;text-align:right;letter-spacing:-0.205px;">1,216,658 </div>
<div class="t " style="left:660.00px;top:353.98px;width:600px;text-align:left;letter-spacing:-0.010px;">Arrangement fee</div>
<div class="t " style="left:840.00px;top:353.98px;width:400px;text-align:center;">%</div>
<div class="t " style="left:810.02px;top:353.98px;width:400px;text-align:right;color:#2F5597;letter-spacing:-0.480px;">0.50%</div>
<div class="t " style="left:660.00px;top:374.98px;width:600px;text-align:left;letter-spacing:0.133px;">Interest rate</div>
<div class="t " style="left:840.00px;top:374.98px;width:400px;text-align:center;">%</div>
<div class="t " style="left:809.78px;top:374.98px;width:400px;text-align:right;color:#2F5597;letter-spacing:-0.719px;">5.0%</div>
<div class="t " style="left:660.00px;top:416.98px;width:600px;text-align:left;letter-spacing:0.069px;">Amortization period</div>
<div class="t " style="left:839.77px;top:416.98px;width:400px;text-align:center;letter-spacing:-0.452px;">years</div>
<div class="t " style="left:810.50px;top:416.98px;width:400px;text-align:right;color:#2F5597;">20</div>
<div class="t " style="left:660.00px;top:437.98px;width:600px;text-align:left;letter-spacing:-0.101px;">Balloon</div>
<div class="t " style="left:840.00px;top:437.98px;width:400px;text-align:center;">%</div>
<div class="t " style="left:809.39px;top:437.98px;width:400px;text-align:right;color:#2F5597;letter-spacing:-1.114px;">60%</div>
<div class="t " style="left:660.00px;top:458.98px;width:600px;text-align:left;letter-spacing:0.101px;">Annual amortisation</div>
<div class="t " style="left:840.00px;top:458.98px;width:400px;text-align:center;">%</div>
<div class="t " style="left:809.78px;top:458.98px;width:400px;text-align:right;letter-spacing:-0.719px;">2.0%</div>
<div class="t " style="left:660.00px;top:479.98px;width:600px;text-align:left;letter-spacing:0.008px;">Balloon repayment</div>
<div class="t " style="left:839.92px;top:479.98px;width:400px;text-align:center;letter-spacing:-0.152px;">date</div>
<div class="t " style="left:810.07px;top:479.98px;width:400px;text-align:right;letter-spacing:-0.428px;">31-Jan-46</div>
<div class="t " style="left:660.00px;top:521.98px;width:600px;text-align:left;letter-spacing:0.077px;">Interest period</div>
<div class="t " style="left:839.92px;top:521.98px;width:400px;text-align:center;letter-spacing:-0.170px;">months</div>
<div class="t " style="left:810.50px;top:521.98px;width:400px;text-align:right;color:#2F5597;">3</div>
<div class="t " style="left:660.00px;top:542.98px;width:600px;text-align:left;letter-spacing:0.057px;">Grace period (interest-only)</div>
<div class="t " style="left:839.92px;top:542.98px;width:400px;text-align:center;letter-spacing:-0.170px;">months</div>
<div class="t " style="left:810.50px;top:542.98px;width:400px;text-align:right;color:#2F5597;">12</div>
<div class="t " style="left:660.00px;top:564.98px;width:600px;text-align:left;letter-spacing:-0.052px;">Use excess cash for early repayments</div>
<div class="t " style="left:840.05px;top:564.98px;width:400px;text-align:center;letter-spacing:0.109px;">yes/no</div>
<div class="t " style="left:660.00px;top:607.98px;width:600px;text-align:left;letter-spacing:-0.801px;">Min DSCR</div>
<div class="t " style="left:840.00px;top:607.98px;width:400px;text-align:center;">x</div>
<div class="t " style="left:810.50px;top:607.98px;width:400px;text-align:right;color:#2F5597;">1.2x</div>
<div class="t " style="left:660.00px;top:628.98px;width:600px;text-align:left;letter-spacing:-0.173px;">Min LTV</div>
<div class="t " style="left:840.00px;top:628.98px;width:400px;text-align:center;">%</div>
<div class="t " style="left:809.39px;top:628.98px;width:400px;text-align:right;color:#2F5597;letter-spacing:-1.114px;">60%</div>
<div class="t " style="left:955.40px;top:564.98px;width:400px;text-align:center;color:#808080;letter-spacing:-1.200px;">TRUE</div>
<div style="left:1104px;top:567px;width:13px;height:13px;box-sizing:border-box;border:1px solid #000;background:#fff;"></div>
<svg style="left:1105px;top:568px" width="11" height="11" viewBox="0 0 11 11"><path d="M2 5.2 L4.3 7.8 L9 2.6" fill="none" stroke="#000" stroke-width="2"/></svg>
<div style="left:656px;top:647px;width:557px;height:2px;background:#1F497D;"></div>
<div style="left:656px;top:242px;width:2px;height:407px;background:#1F497D;"></div>
<div style="left:1211px;top:242px;width:2px;height:407px;background:#1F497D;"></div>
<div style="left:656px;top:669px;width:557px;height:22px;background:#1F497D;"></div>
<div class="t b" style="left:660.00px;top:674.22px;width:700px;text-align:left;color:#fff;font-size:13.8px;letter-spacing:-0.164px;">OTHER ASSUMPTIONS</div>
<div style="left:1100px;top:798px;width:113px;height:22px;background:#DCE6F1;"></div>
<div style="left:1099px;top:797px;width:114px;height:1px;background:repeating-linear-gradient(90deg,#1F497D 0 2px,transparent 2px 4px);"></div>
<div style="left:1099px;top:819px;width:114px;height:1px;background:repeating-linear-gradient(90deg,#1F497D 0 2px,transparent 2px 4px);"></div>
<div style="left:1099px;top:797px;width:1px;height:23px;background:repeating-linear-gradient(180deg,#1F497D 0 2px,transparent 2px 4px);"></div>
<div style="left:1212px;top:797px;width:1px;height:23px;background:repeating-linear-gradient(180deg,#1F497D 0 2px,transparent 2px 4px);"></div>
<div style="left:1100px;top:820px;width:113px;height:22px;background:#DCE6F1;"></div>
<div style="left:1099px;top:819px;width:114px;height:1px;background:repeating-linear-gradient(90deg,#1F497D 0 2px,transparent 2px 4px);"></div>
<div style="left:1099px;top:841px;width:114px;height:1px;background:repeating-linear-gradient(90deg,#1F497D 0 2px,transparent 2px 4px);"></div>
<div style="left:1099px;top:819px;width:1px;height:23px;background:repeating-linear-gradient(180deg,#1F497D 0 2px,transparent 2px 4px);"></div>
<div style="left:1212px;top:819px;width:1px;height:23px;background:repeating-linear-gradient(180deg,#1F497D 0 2px,transparent 2px 4px);"></div>
<div style="left:1100px;top:842px;width:113px;height:21px;background:#DCE6F1;"></div>
<div style="left:1099px;top:841px;width:114px;height:1px;background:repeating-linear-gradient(90deg,#1F497D 0 2px,transparent 2px 4px);"></div>
<div style="left:1099px;top:862px;width:114px;height:1px;background:repeating-linear-gradient(90deg,#1F497D 0 2px,transparent 2px 4px);"></div>
<div style="left:1099px;top:841px;width:1px;height:22px;background:repeating-linear-gradient(180deg,#1F497D 0 2px,transparent 2px 4px);"></div>
<div style="left:1212px;top:841px;width:1px;height:22px;background:repeating-linear-gradient(180deg,#1F497D 0 2px,transparent 2px 4px);"></div>
<div style="left:1100px;top:863px;width:113px;height:22px;background:#DCE6F1;"></div>
<div style="left:1099px;top:862px;width:114px;height:1px;background:repeating-linear-gradient(90deg,#1F497D 0 2px,transparent 2px 4px);"></div>
<div style="left:1099px;top:884px;width:114px;height:1px;background:repeating-linear-gradient(90deg,#1F497D 0 2px,transparent 2px 4px);"></div>
<div style="left:1099px;top:862px;width:1px;height:23px;background:repeating-linear-gradient(180deg,#1F497D 0 2px,transparent 2px 4px);"></div>
<div style="left:1212px;top:862px;width:1px;height:23px;background:repeating-linear-gradient(180deg,#1F497D 0 2px,transparent 2px 4px);"></div>
<div class="t " style="left:660.00px;top:693.98px;width:600px;text-align:left;letter-spacing:-0.123px;">Economic assumptions</div>
<div class="t " style="left:839.62px;top:693.98px;width:400px;text-align:center;color:#0000FF;letter-spacing:-0.752px;">#NAME?</div>
<div class="t i" style="left:811.68px;top:693.98px;width:400px;text-align:right;letter-spacing:-0.412px;">#NAME? </div>
<div style="left:981px;top:692px;width:0;height:0;border-top:6px solid #1E8E3E;border-right:6px solid transparent;"></div>
<div style="left:1100px;top:692px;width:0;height:0;border-top:6px solid #1E8E3E;border-right:6px solid transparent;"></div>
<div class="t " style="left:660.00px;top:714.98px;width:600px;text-align:left;letter-spacing:-0.025px;">Revenue and direct cost assumptions</div>
<div class="t " style="left:839.62px;top:714.98px;width:400px;text-align:center;color:#0000FF;letter-spacing:-0.752px;">#NAME?</div>
<div class="t i" style="left:811.68px;top:714.98px;width:400px;text-align:right;letter-spacing:-0.412px;">#NAME? </div>
<div style="left:981px;top:713px;width:0;height:0;border-top:6px solid #1E8E3E;border-right:6px solid transparent;"></div>
<div style="left:1100px;top:713px;width:0;height:0;border-top:6px solid #1E8E3E;border-right:6px solid transparent;"></div>
<div class="t " style="left:660.00px;top:736.98px;width:600px;text-align:left;letter-spacing:-0.086px;">Capital expenses</div>
<div class="t " style="left:839.62px;top:736.98px;width:400px;text-align:center;color:#0000FF;letter-spacing:-0.752px;">#NAME?</div>
<div class="t i" style="left:811.68px;top:736.98px;width:400px;text-align:right;letter-spacing:-0.412px;">#NAME? </div>
<div style="left:981px;top:735px;width:0;height:0;border-top:6px solid #1E8E3E;border-right:6px solid transparent;"></div>
<div style="left:1100px;top:735px;width:0;height:0;border-top:6px solid #1E8E3E;border-right:6px solid transparent;"></div>
<div class="t " style="left:660.00px;top:757.98px;width:600px;text-align:left;letter-spacing:-0.208px;">Employee costs</div>
<div class="t " style="left:839.62px;top:757.98px;width:400px;text-align:center;color:#0000FF;letter-spacing:-0.752px;">#NAME?</div>
<div class="t i" style="left:811.68px;top:757.98px;width:400px;text-align:right;letter-spacing:-0.412px;">#NAME? </div>
<div style="left:981px;top:756px;width:0;height:0;border-top:6px solid #1E8E3E;border-right:6px solid transparent;"></div>
<div style="left:1100px;top:756px;width:0;height:0;border-top:6px solid #1E8E3E;border-right:6px solid transparent;"></div>
<div class="t " style="left:660.00px;top:778.98px;width:600px;text-align:left;letter-spacing:0.103px;">Working capital assumptions</div>
<div class="t " style="left:839.62px;top:778.98px;width:400px;text-align:center;color:#0000FF;letter-spacing:-0.752px;">#NAME?</div>
<div class="t i" style="left:811.68px;top:778.98px;width:400px;text-align:right;letter-spacing:-0.412px;">#NAME? </div>
<div style="left:981px;top:777px;width:0;height:0;border-top:6px solid #1E8E3E;border-right:6px solid transparent;"></div>
<div style="left:1100px;top:777px;width:0;height:0;border-top:6px solid #1E8E3E;border-right:6px solid transparent;"></div>
<div class="t " style="left:670.00px;top:799.98px;width:600px;text-align:left;letter-spacing:0.035px;">Min cash balance</div>
<div class="t " style="left:839.79px;top:799.98px;width:400px;text-align:center;letter-spacing:-0.419px;">% revenue</div>
<div class="t " style="left:810.02px;top:799.98px;width:400px;text-align:right;color:#2F5597;letter-spacing:-0.480px;">0.25%</div>
<div class="t " style="left:670.00px;top:821.98px;width:600px;text-align:left;letter-spacing:0.031px;">Other current assets</div>
<div class="t " style="left:839.79px;top:821.98px;width:400px;text-align:center;letter-spacing:-0.419px;">% revenue</div>
<div class="t " style="left:810.02px;top:821.98px;width:400px;text-align:right;color:#2F5597;letter-spacing:-0.480px;">0.50%</div>
<div class="t " style="left:670.00px;top:843.98px;width:600px;text-align:left;letter-spacing:0.246px;">Other current liabilities</div>
<div class="t " style="left:839.79px;top:843.98px;width:400px;text-align:center;letter-spacing:-0.419px;">% revenue</div>
<div class="t " style="left:810.02px;top:843.98px;width:400px;text-align:right;color:#2F5597;letter-spacing:-0.480px;">0.25%</div>
<div class="t " style="left:670.00px;top:864.98px;width:600px;text-align:left;letter-spacing:0.037px;">Dividend payment month</div>
<div class="t " style="left:839.96px;top:864.98px;width:400px;text-align:center;letter-spacing:-0.084px;">month</div>
<div class="t " style="left:810.50px;top:864.98px;width:400px;text-align:right;color:#2F5597;">12</div>
<div style="left:1099px;top:905px;width:114px;height:1px;background:repeating-linear-gradient(90deg,#1F497D 0 2px,transparent 2px 4px);"></div>
<div style="left:656px;top:690px;width:2px;height:238px;background:#1F497D;"></div>
<div style="left:1211px;top:690px;width:2px;height:238px;background:#1F497D;"></div>
<div style="left:1242px;top:221px;width:855px;height:22px;background:#1F497D;"></div>
<div class="t b" style="left:1246.00px;top:226.22px;width:700px;text-align:left;color:#fff;font-size:13.8px;letter-spacing:0.007px;">GROWTH ASSUMPTIONS</div>
<div style="left:1244px;top:243px;width:757px;height:46px;background:#D9D9D9;"></div>
<div style="left:1427px;top:264px;width:574px;height:1px;background:#000;"></div>
<div class="t b" style="left:1610.38px;top:246.48px;width:300px;text-align:center;letter-spacing:-0.246px;">Growth stages</div>
<div class="t b" style="left:1190.19px;top:269.98px;width:400px;text-align:right;letter-spacing:-0.312px;">Ramp-up</div>
<div class="t b" style="left:1358.28px;top:269.98px;width:400px;text-align:right;letter-spacing:-0.224px;">Stabilized</div>
<div class="t b" style="left:1522.50px;top:269.98px;width:400px;text-align:right;">Mature</div>
<div style="left:1425px;top:289px;width:504px;height:21px;background:#DCE6F1;"></div>
<div style="left:1424px;top:288px;width:505px;height:1px;background:repeating-linear-gradient(90deg,#1F497D 0 2px,transparent 2px 4px);"></div>
<div style="left:1424px;top:309px;width:505px;height:1px;background:repeating-linear-gradient(90deg,#1F497D 0 2px,transparent 2px 4px);"></div>
<div style="left:1424px;top:288px;width:1px;height:22px;background:repeating-linear-gradient(180deg,#1F497D 0 2px,transparent 2px 4px);"></div>
<div style="left:1592px;top:288px;width:1px;height:22px;background:repeating-linear-gradient(180deg,#1F497D 0 2px,transparent 2px 4px);"></div>
<div style="left:1760px;top:288px;width:1px;height:22px;background:repeating-linear-gradient(180deg,#1F497D 0 2px,transparent 2px 4px);"></div>
<div style="left:1928px;top:288px;width:1px;height:22px;background:repeating-linear-gradient(180deg,#1F497D 0 2px,transparent 2px 4px);"></div>
<div style="left:1424px;top:372px;width:577px;height:1px;background:repeating-linear-gradient(90deg,#1F497D 0 2px,transparent 2px 4px);"></div>
<div style="left:1425px;top:394px;width:504px;height:63px;background:#DCE6F1;"></div>
<div style="left:1424px;top:393px;width:505px;height:1px;background:repeating-linear-gradient(90deg,#1F497D 0 2px,transparent 2px 4px);"></div>
<div style="left:1424px;top:414px;width:505px;height:1px;background:repeating-linear-gradient(90deg,#1F497D 0 2px,transparent 2px 4px);"></div>
<div style="left:1424px;top:435px;width:505px;height:1px;background:repeating-linear-gradient(90deg,#1F497D 0 2px,transparent 2px 4px);"></div>
<div style="left:1424px;top:456px;width:505px;height:1px;background:repeating-linear-gradient(90deg,#1F497D 0 2px,transparent 2px 4px);"></div>
<div style="left:1424px;top:393px;width:1px;height:64px;background:repeating-linear-gradient(180deg,#1F497D 0 2px,transparent 2px 4px);"></div>
<div style="left:1592px;top:393px;width:1px;height:64px;background:repeating-linear-gradient(180deg,#1F497D 0 2px,transparent 2px 4px);"></div>
<div style="left:1760px;top:393px;width:1px;height:64px;background:repeating-linear-gradient(180deg,#1F497D 0 2px,transparent 2px 4px);"></div>
<div style="left:1928px;top:393px;width:1px;height:64px;background:repeating-linear-gradient(180deg,#1F497D 0 2px,transparent 2px 4px);"></div>
<div class="t b" style="left:1246.00px;top:290.98px;width:600px;text-align:left;letter-spacing:0.066px;">Starting month</div>
<div class="t " style="left:1190.50px;top:290.98px;width:400px;text-align:right;color:#2F5597;">1</div>
<div class="t " style="left:1358.50px;top:290.98px;width:400px;text-align:right;color:#2F5597;">2</div>
<div class="t " style="left:1256.00px;top:311.98px;width:600px;text-align:left;letter-spacing:-0.101px;">Start date</div>
<div class="t " style="left:1190.50px;top:311.98px;width:400px;text-align:right;color:#228B22;letter-spacing:0.003px;">1-May-26</div>
<div class="t " style="left:1358.03px;top:311.98px;width:400px;text-align:right;letter-spacing:-0.466px;">1-Jun-26</div>
<div class="t " style="left:1525.03px;top:311.98px;width:400px;text-align:right;letter-spacing:-0.466px;">1-Jun-26</div>
<div class="t " style="left:1256.00px;top:332.98px;width:600px;text-align:left;letter-spacing:-0.326px;">End date</div>
<div class="t " style="left:1190.49px;top:332.98px;width:400px;text-align:right;letter-spacing:-0.005px;">31-May-26</div>
<div class="t " style="left:1358.06px;top:332.98px;width:400px;text-align:right;letter-spacing:-0.444px;">30-Sep-26</div>
<div class="t " style="left:1525.00px;top:332.98px;width:400px;text-align:right;">30-Nov-26</div>
<div class="t b" style="left:1246.00px;top:374.98px;width:600px;text-align:left;letter-spacing:0.089px;">Utilisation at start darte</div>
<div class="t " style="left:1189.79px;top:374.98px;width:400px;text-align:right;letter-spacing:-0.705px;">50.0%</div>
<div class="t " style="left:1357.79px;top:374.98px;width:400px;text-align:right;letter-spacing:-0.705px;">80.0%</div>
<div class="t " style="left:1524.29px;top:374.98px;width:400px;text-align:right;letter-spacing:-0.705px;">90.0%</div>
<div class="t " style="left:1256.00px;top:395.98px;width:600px;text-align:left;letter-spacing:-0.173px;">Upside case</div>
<div class="t " style="left:1189.79px;top:395.98px;width:400px;text-align:right;color:#2F5597;letter-spacing:-0.705px;">55.0%</div>
<div class="t " style="left:1357.79px;top:395.98px;width:400px;text-align:right;color:#2F5597;letter-spacing:-0.705px;">85.0%</div>
<div class="t " style="left:1524.29px;top:395.98px;width:400px;text-align:right;color:#2F5597;letter-spacing:-0.705px;">95.0%</div>
<div class="t " style="left:1256.00px;top:416.98px;width:600px;text-align:left;letter-spacing:-0.343px;">Base case</div>
<div class="t " style="left:1189.79px;top:416.98px;width:400px;text-align:right;color:#2F5597;letter-spacing:-0.705px;">50.0%</div>
<div class="t " style="left:1357.79px;top:416.98px;width:400px;text-align:right;color:#2F5597;letter-spacing:-0.705px;">80.0%</div>
<div class="t " style="left:1524.29px;top:416.98px;width:400px;text-align:right;color:#2F5597;letter-spacing:-0.705px;">90.0%</div>
<div class="t " style="left:1256.00px;top:437.98px;width:600px;text-align:left;letter-spacing:-0.114px;">Downside case</div>
<div class="t " style="left:1189.79px;top:437.98px;width:400px;text-align:right;color:#2F5597;letter-spacing:-0.705px;">45.0%</div>
<div class="t " style="left:1357.79px;top:437.98px;width:400px;text-align:right;color:#2F5597;letter-spacing:-0.705px;">75.0%</div>
<div class="t " style="left:1524.29px;top:437.98px;width:400px;text-align:right;color:#2F5597;letter-spacing:-0.705px;">85.0%</div>
<div class="t b" style="left:1246.00px;top:479.98px;width:600px;text-align:left;letter-spacing:0.087px;">Utilisation at end date</div>
<div class="t " style="left:1189.79px;top:479.98px;width:400px;text-align:right;letter-spacing:-0.705px;">80.0%</div>
<div class="t " style="left:1357.79px;top:479.98px;width:400px;text-align:right;letter-spacing:-0.705px;">90.0%</div>
<div class="t " style="left:1524.29px;top:479.98px;width:400px;text-align:right;letter-spacing:-0.705px;">95.0%</div>
<div class="t i" style="left:1256.00px;top:521.98px;width:600px;text-align:left;letter-spacing:-0.043px;">Slope (monthly change)</div>
<div class="t i" style="left:1191.44px;top:521.98px;width:400px;text-align:right;letter-spacing:-0.530px;">30.0% </div>
<div style="left:1425px;top:520px;width:0;height:0;border-top:6px solid #1E8E3E;border-right:6px solid transparent;"></div>
<div class="t i" style="left:1358.66px;top:521.98px;width:400px;text-align:right;letter-spacing:-0.919px;">3.3% </div>
<div style="left:1593px;top:520px;width:0;height:0;border-top:6px solid #1E8E3E;border-right:6px solid transparent;"></div>
<div class="t i" style="left:1532.00px;top:521.98px;width:400px;text-align:right;">1.7% </div>
<div style="left:1761px;top:520px;width:0;height:0;border-top:6px solid #1E8E3E;border-right:6px solid transparent;"></div>
<div class="t i" style="left:1256.00px;top:542.98px;width:600px;text-align:left;letter-spacing:0.039px;">Intercept</div>
<div class="t i" style="left:1191.39px;top:542.98px;width:400px;text-align:right;letter-spacing:-0.555px;">20.0% </div>
<div style="left:1425px;top:541px;width:0;height:0;border-top:6px solid #1E8E3E;border-right:6px solid transparent;"></div>
<div class="t i" style="left:1359.44px;top:542.98px;width:400px;text-align:right;letter-spacing:-0.530px;">73.3% </div>
<div style="left:1593px;top:541px;width:0;height:0;border-top:6px solid #1E8E3E;border-right:6px solid transparent;"></div>
<div class="t i" style="left:1532.00px;top:542.98px;width:400px;text-align:right;">76.7% </div>
<div style="left:1761px;top:541px;width:0;height:0;border-top:6px solid #1E8E3E;border-right:6px solid transparent;"></div>
<div style="left:1242px;top:561px;width:855px;height:2px;background:#1F497D;"></div>
<div style="left:1242px;top:242px;width:2px;height:321px;background:#1F497D;"></div>
<div style="left:1242px;top:669px;width:855px;height:22px;background:#1F497D;"></div>
<div class="t b" style="left:1246.00px;top:674.22px;width:700px;text-align:left;color:#fff;font-size:13.8px;letter-spacing:-0.150px;">PROFIT DISTRIBUTION ASSUMPTIONS</div>
<div style="left:1244px;top:691px;width:757px;height:22px;background:#D9D9D9;"></div>
<div class="t b" style="left:1358.64px;top:693.98px;width:400px;text-align:right;letter-spacing:0.143px;">Hurdle rate (up to)</div>
<div class="t b" style="left:1533.00px;top:693.98px;width:400px;text-align:right;">Limited partners</div>
<div style="left:1761px;top:713px;width:168px;height:107px;background:#DCE6F1;"></div>
<div style="left:1760px;top:712px;width:169px;height:1px;background:repeating-linear-gradient(90deg,#1F497D 0 2px,transparent 2px 4px);"></div>
<div style="left:1760px;top:734px;width:169px;height:1px;background:repeating-linear-gradient(90deg,#1F497D 0 2px,transparent 2px 4px);"></div>
<div style="left:1760px;top:755px;width:169px;height:1px;background:repeating-linear-gradient(90deg,#1F497D 0 2px,transparent 2px 4px);"></div>
<div style="left:1760px;top:776px;width:169px;height:1px;background:repeating-linear-gradient(90deg,#1F497D 0 2px,transparent 2px 4px);"></div>
<div style="left:1760px;top:797px;width:169px;height:1px;background:repeating-linear-gradient(90deg,#1F497D 0 2px,transparent 2px 4px);"></div>
<div style="left:1760px;top:819px;width:169px;height:1px;background:repeating-linear-gradient(90deg,#1F497D 0 2px,transparent 2px 4px);"></div>
<div style="left:1760px;top:712px;width:1px;height:108px;background:repeating-linear-gradient(180deg,#1F497D 0 2px,transparent 2px 4px);"></div>
<div style="left:1928px;top:712px;width:1px;height:108px;background:repeating-linear-gradient(180deg,#1F497D 0 2px,transparent 2px 4px);"></div>
<div style="left:1593px;top:735px;width:168px;height:63px;background:#DCE6F1;"></div>
<div style="left:1592px;top:734px;width:169px;height:1px;background:repeating-linear-gradient(90deg,#1F497D 0 2px,transparent 2px 4px);"></div>
<div style="left:1592px;top:755px;width:169px;height:1px;background:repeating-linear-gradient(90deg,#1F497D 0 2px,transparent 2px 4px);"></div>
<div style="left:1592px;top:776px;width:169px;height:1px;background:repeating-linear-gradient(90deg,#1F497D 0 2px,transparent 2px 4px);"></div>
<div style="left:1592px;top:797px;width:169px;height:1px;background:repeating-linear-gradient(90deg,#1F497D 0 2px,transparent 2px 4px);"></div>
<div style="left:1592px;top:734px;width:1px;height:64px;background:repeating-linear-gradient(180deg,#1F497D 0 2px,transparent 2px 4px);"></div>
<div style="left:1760px;top:734px;width:1px;height:64px;background:repeating-linear-gradient(180deg,#1F497D 0 2px,transparent 2px 4px);"></div>
<div style="left:1242px;top:733px;width:759px;height:2px;background:#1F497D;"></div>
<div style="left:1242px;top:818px;width:759px;height:2px;background:#1F497D;"></div>
<div style="left:1242px;top:840px;width:759px;height:2px;background:#1F497D;"></div>
<div class="t " style="left:1246.00px;top:714.98px;width:600px;text-align:left;letter-spacing:0.043px;">Participation shares</div>
<div class="t " style="left:1246.00px;top:736.98px;width:600px;text-align:left;letter-spacing:0.482px;">Waterfall</div>
<div class="t " style="left:1246.00px;top:821.98px;width:600px;text-align:left;letter-spacing:-0.303px;">Returns (IRR<span class="bu">•</span>EqM<span class="bu">•</span>GR)</div>
<div class="t " style="left:1697.50px;top:712.32px;width:60px;text-align:right;font-size:13.5px;">~~</div>
<div class="t " style="left:1697.50px;top:819.32px;width:60px;text-align:right;font-size:13.5px;">~~</div>
<div class="t " style="left:1358.75px;top:799.98px;width:400px;text-align:right;letter-spacing:0.252px;">thereafter</div>
<div class="t " style="left:1357.79px;top:736.98px;width:400px;text-align:right;color:#2F5597;letter-spacing:-0.705px;">20.0%</div>
<div class="t " style="left:1357.79px;top:757.98px;width:400px;text-align:right;color:#2F5597;letter-spacing:-0.705px;">25.0%</div>
<div class="t " style="left:1357.79px;top:778.98px;width:400px;text-align:right;color:#2F5597;letter-spacing:-0.705px;">30.0%</div>
<div class="t " style="left:1528.00px;top:714.98px;width:400px;text-align:right;color:#2F5597;">85.00%</div>
<div class="t " style="left:1524.79px;top:736.98px;width:400px;text-align:right;color:#2F5597;letter-spacing:-0.705px;">90.0%</div>
<div class="t " style="left:1524.79px;top:757.98px;width:400px;text-align:right;color:#2F5597;letter-spacing:-0.705px;">80.0%</div>
<div class="t " style="left:1524.79px;top:778.98px;width:400px;text-align:right;color:#2F5597;letter-spacing:-0.705px;">70.0%</div>
<div class="t " style="left:1524.79px;top:799.98px;width:400px;text-align:right;color:#2F5597;letter-spacing:-0.705px;">60.0%</div>
<div class="t " style="left:1526.50px;top:821.98px;width:400px;text-align:right;">93.4% <span class="bu">•</span> 17.0x <span class="bu">•</span> 18.4m</div>
<div style="left:1242px;top:690px;width:2px;height:152px;background:#1F497D;"></div>
<div class="t b" style="left:64.00px;top:51.89px;width:500px;text-align:left;font-size:16.2px;letter-spacing:-0.017px;">INPUTS AND ASSUMPTIONS</div>
</div>
<div id="hd">
<div style="left:0px;top:0px;width:1921px;height:26px;background:#E6E6E6;"></div>
<div style="left:0px;top:26px;width:1895px;height:1px;background:#9B9B9B;"></div>
<div style="left:28px;top:6px;width:32px;height:20px;background:#D2D2D2;"></div>
<div style="left:60px;top:6px;width:1px;height:20px;background:linear-gradient(180deg,#DDDDDD,#9B9B9B);"></div>
<div style="left:383px;top:6px;width:1px;height:20px;background:linear-gradient(180deg,#DDDDDD,#9B9B9B);"></div>
<div style="left:502px;top:6px;width:1px;height:20px;background:linear-gradient(180deg,#DDDDDD,#9B9B9B);"></div>
<div style="left:625px;top:6px;width:1px;height:20px;background:linear-gradient(180deg,#DDDDDD,#9B9B9B);"></div>
<div style="left:657px;top:6px;width:1px;height:20px;background:linear-gradient(180deg,#DDDDDD,#9B9B9B);"></div>
<div style="left:980px;top:6px;width:1px;height:20px;background:linear-gradient(180deg,#DDDDDD,#9B9B9B);"></div>
<div style="left:1099px;top:6px;width:1px;height:20px;background:linear-gradient(180deg,#DDDDDD,#9B9B9B);"></div>
<div style="left:1212px;top:6px;width:1px;height:20px;background:linear-gradient(180deg,#DDDDDD,#9B9B9B);"></div>
<div style="left:1243px;top:6px;width:1px;height:20px;background:linear-gradient(180deg,#DDDDDD,#9B9B9B);"></div>
<div style="left:1424px;top:6px;width:1px;height:20px;background:linear-gradient(180deg,#DDDDDD,#9B9B9B);"></div>
<div style="left:1592px;top:6px;width:1px;height:20px;background:linear-gradient(180deg,#DDDDDD,#9B9B9B);"></div>
<div style="left:1760px;top:6px;width:1px;height:20px;background:linear-gradient(180deg,#DDDDDD,#9B9B9B);"></div>
<div class="t " style="left:24.50px;top:7.98px;width:40px;text-align:center;color:#217346;">A</div>
<div class="t " style="left:202.00px;top:7.98px;width:40px;text-align:center;color:#1E1E1E;">B</div>
<div class="t " style="left:423.00px;top:7.98px;width:40px;text-align:center;color:#1E1E1E;">C</div>
<div class="t " style="left:544.00px;top:7.98px;width:40px;text-align:center;color:#1E1E1E;">D</div>
<div class="t " style="left:621.50px;top:7.98px;width:40px;text-align:center;color:#1E1E1E;">E</div>
<div class="t " style="left:799.00px;top:7.98px;width:40px;text-align:center;color:#1E1E1E;">F</div>
<div class="t " style="left:1020.00px;top:7.98px;width:40px;text-align:center;color:#1E1E1E;">G</div>
<div class="t " style="left:1136.00px;top:7.98px;width:40px;text-align:center;color:#1E1E1E;">H</div>
<div class="t " style="left:1208.00px;top:7.98px;width:40px;text-align:center;color:#1E1E1E;">I</div>
<div class="t " style="left:1314.00px;top:7.98px;width:40px;text-align:center;color:#1E1E1E;">J</div>
<div class="t " style="left:1488.50px;top:7.98px;width:40px;text-align:center;color:#1E1E1E;">K</div>
<div class="t " style="left:1656.50px;top:7.98px;width:40px;text-align:center;color:#1E1E1E;">L</div>
<div class="t " style="left:1824.50px;top:7.98px;width:40px;text-align:center;color:#1E1E1E;">M</div>
<svg style="left:12px;top:10px" width="14" height="14" viewBox="0 0 14 14"><path d="M13 0.5 L13 13 L0.5 13 Z" fill="#B2B2B2"/></svg>
<div style="left:0px;top:27px;width:28px;height:879px;background:#E6E6E6;"></div>
<div style="left:0px;top:27px;width:28px;height:20px;background:#D2D2D2;"></div>
<div style="left:28px;top:27px;width:1px;height:879px;background:#9B9B9B;"></div>
<div style="left:0px;top:47px;width:28px;height:1px;background:linear-gradient(90deg,#DDDDDD,#9B9B9B);"></div>
<div class="t " style="left:-1.00px;top:28.98px;width:30px;text-align:center;color:#217346;">1</div>
<div style="left:0px;top:72px;width:28px;height:1px;background:linear-gradient(90deg,#DDDDDD,#9B9B9B);"></div>
<div class="t " style="left:-1.00px;top:51.98px;width:30px;text-align:center;color:#1E1E1E;">2</div>
<div style="left:0px;top:94px;width:28px;height:1px;background:linear-gradient(90deg,#DDDDDD,#9B9B9B);"></div>
<div class="t " style="left:-1.00px;top:74.98px;width:30px;text-align:center;color:#1E1E1E;">3</div>
<div style="left:0px;top:115px;width:28px;height:1px;background:linear-gradient(90deg,#DDDDDD,#9B9B9B);"></div>
<div class="t " style="left:-1.00px;top:96.98px;width:30px;text-align:center;color:#1E1E1E;">4</div>
<div style="left:0px;top:136px;width:28px;height:1px;background:linear-gradient(90deg,#DDDDDD,#9B9B9B);"></div>
<div class="t " style="left:-1.00px;top:117.98px;width:30px;text-align:center;color:#1E1E1E;">5</div>
<div style="left:0px;top:157px;width:28px;height:1px;background:linear-gradient(90deg,#DDDDDD,#9B9B9B);"></div>
<div class="t " style="left:-1.00px;top:138.98px;width:30px;text-align:center;color:#1E1E1E;">6</div>
<div style="left:0px;top:178px;width:28px;height:1px;background:linear-gradient(90deg,#DDDDDD,#9B9B9B);"></div>
<div class="t " style="left:-1.00px;top:159.98px;width:30px;text-align:center;color:#1E1E1E;">7</div>
<div style="left:0px;top:200px;width:28px;height:1px;background:linear-gradient(90deg,#DDDDDD,#9B9B9B);"></div>
<div class="t " style="left:-1.00px;top:180.98px;width:30px;text-align:center;color:#1E1E1E;">8</div>
<div style="left:0px;top:222px;width:28px;height:1px;background:linear-gradient(90deg,#DDDDDD,#9B9B9B);"></div>
<div class="t " style="left:-1.00px;top:202.98px;width:30px;text-align:center;color:#1E1E1E;">9</div>
<div style="left:0px;top:243px;width:28px;height:1px;background:linear-gradient(90deg,#DDDDDD,#9B9B9B);"></div>
<div class="t " style="left:-1.00px;top:224.98px;width:30px;text-align:center;color:#1E1E1E;">10</div>
<div style="left:0px;top:267px;width:28px;height:1px;background:linear-gradient(90deg,#DDDDDD,#9B9B9B);"></div>
<div class="t " style="left:-1.00px;top:246.98px;width:30px;text-align:center;color:#1E1E1E;">11</div>
<div style="left:0px;top:288px;width:28px;height:1px;background:linear-gradient(90deg,#DDDDDD,#9B9B9B);"></div>
<div class="t " style="left:-1.00px;top:269.98px;width:30px;text-align:center;color:#1E1E1E;">12</div>
<div style="left:0px;top:309px;width:28px;height:1px;background:linear-gradient(90deg,#DDDDDD,#9B9B9B);"></div>
<div class="t " style="left:-1.00px;top:290.98px;width:30px;text-align:center;color:#1E1E1E;">13</div>
<div style="left:0px;top:330px;width:28px;height:1px;background:linear-gradient(90deg,#DDDDDD,#9B9B9B);"></div>
<div class="t " style="left:-1.00px;top:311.98px;width:30px;text-align:center;color:#1E1E1E;">14</div>
<div style="left:0px;top:351px;width:28px;height:1px;background:linear-gradient(90deg,#DDDDDD,#9B9B9B);"></div>
<div class="t " style="left:-1.00px;top:332.98px;width:30px;text-align:center;color:#1E1E1E;">15</div>
<div style="left:0px;top:372px;width:28px;height:1px;background:linear-gradient(90deg,#DDDDDD,#9B9B9B);"></div>
<div class="t " style="left:-1.00px;top:353.98px;width:30px;text-align:center;color:#1E1E1E;">16</div>
<div style="left:0px;top:393px;width:28px;height:1px;background:linear-gradient(90deg,#DDDDDD,#9B9B9B);"></div>
<div class="t " style="left:-1.00px;top:374.98px;width:30px;text-align:center;color:#1E1E1E;">17</div>
<div style="left:0px;top:414px;width:28px;height:1px;background:linear-gradient(90deg,#DDDDDD,#9B9B9B);"></div>
<div class="t " style="left:-1.00px;top:395.98px;width:30px;text-align:center;color:#1E1E1E;">18</div>
<div style="left:0px;top:435px;width:28px;height:1px;background:linear-gradient(90deg,#DDDDDD,#9B9B9B);"></div>
<div class="t " style="left:-1.00px;top:416.98px;width:30px;text-align:center;color:#1E1E1E;">19</div>
<div style="left:0px;top:456px;width:28px;height:1px;background:linear-gradient(90deg,#DDDDDD,#9B9B9B);"></div>
<div class="t " style="left:-1.00px;top:437.98px;width:30px;text-align:center;color:#1E1E1E;">20</div>
<div style="left:0px;top:477px;width:28px;height:1px;background:linear-gradient(90deg,#DDDDDD,#9B9B9B);"></div>
<div class="t " style="left:-1.00px;top:458.98px;width:30px;text-align:center;color:#1E1E1E;">21</div>
<div style="left:0px;top:498px;width:28px;height:1px;background:linear-gradient(90deg,#DDDDDD,#9B9B9B);"></div>
<div class="t " style="left:-1.00px;top:479.98px;width:30px;text-align:center;color:#1E1E1E;">22</div>
<div style="left:0px;top:519px;width:28px;height:1px;background:linear-gradient(90deg,#DDDDDD,#9B9B9B);"></div>
<div class="t " style="left:-1.00px;top:500.98px;width:30px;text-align:center;color:#1E1E1E;">23</div>
<div style="left:0px;top:540px;width:28px;height:1px;background:linear-gradient(90deg,#DDDDDD,#9B9B9B);"></div>
<div class="t " style="left:-1.00px;top:521.98px;width:30px;text-align:center;color:#1E1E1E;">24</div>
<div style="left:0px;top:562px;width:28px;height:1px;background:linear-gradient(90deg,#DDDDDD,#9B9B9B);"></div>
<div class="t " style="left:-1.00px;top:542.98px;width:30px;text-align:center;color:#1E1E1E;">25</div>
<div style="left:0px;top:584px;width:28px;height:1px;background:linear-gradient(90deg,#DDDDDD,#9B9B9B);"></div>
<div class="t " style="left:-1.00px;top:564.98px;width:30px;text-align:center;color:#1E1E1E;">26</div>
<div style="left:0px;top:605px;width:28px;height:1px;background:linear-gradient(90deg,#DDDDDD,#9B9B9B);"></div>
<div class="t " style="left:-1.00px;top:586.98px;width:30px;text-align:center;color:#1E1E1E;">27</div>
<div style="left:0px;top:626px;width:28px;height:1px;background:linear-gradient(90deg,#DDDDDD,#9B9B9B);"></div>
<div class="t " style="left:-1.00px;top:607.98px;width:30px;text-align:center;color:#1E1E1E;">28</div>
<div style="left:0px;top:648px;width:28px;height:1px;background:linear-gradient(90deg,#DDDDDD,#9B9B9B);"></div>
<div class="t " style="left:-1.00px;top:628.98px;width:30px;text-align:center;color:#1E1E1E;">29</div>
<div style="left:0px;top:670px;width:28px;height:1px;background:linear-gradient(90deg,#DDDDDD,#9B9B9B);"></div>
<div class="t " style="left:-1.00px;top:650.98px;width:30px;text-align:center;color:#1E1E1E;">30</div>
<div style="left:0px;top:691px;width:28px;height:1px;background:linear-gradient(90deg,#DDDDDD,#9B9B9B);"></div>
<div class="t " style="left:-1.00px;top:672.98px;width:30px;text-align:center;color:#1E1E1E;">31</div>
<div style="left:0px;top:712px;width:28px;height:1px;background:linear-gradient(90deg,#DDDDDD,#9B9B9B);"></div>
<div class="t " style="left:-1.00px;top:693.98px;width:30px;text-align:center;color:#1E1E1E;">32</div>
<div style="left:0px;top:734px;width:28px;height:1px;background:linear-gradient(90deg,#DDDDDD,#9B9B9B);"></div>
<div class="t " style="left:-1.00px;top:714.98px;width:30px;text-align:center;color:#1E1E1E;">33</div>
<div style="left:0px;top:755px;width:28px;height:1px;background:linear-gradient(90deg,#DDDDDD,#9B9B9B);"></div>
<div class="t " style="left:-1.00px;top:736.98px;width:30px;text-align:center;color:#1E1E1E;">34</div>
<div style="left:0px;top:776px;width:28px;height:1px;background:linear-gradient(90deg,#DDDDDD,#9B9B9B);"></div>
<div class="t " style="left:-1.00px;top:757.98px;width:30px;text-align:center;color:#1E1E1E;">35</div>
<div style="left:0px;top:797px;width:28px;height:1px;background:linear-gradient(90deg,#DDDDDD,#9B9B9B);"></div>
<div class="t " style="left:-1.00px;top:778.98px;width:30px;text-align:center;color:#1E1E1E;">36</div>
<div style="left:0px;top:819px;width:28px;height:1px;background:linear-gradient(90deg,#DDDDDD,#9B9B9B);"></div>
<div class="t " style="left:-1.00px;top:799.98px;width:30px;text-align:center;color:#1E1E1E;">37</div>
<div style="left:0px;top:841px;width:28px;height:1px;background:linear-gradient(90deg,#DDDDDD,#9B9B9B);"></div>
<div class="t " style="left:-1.00px;top:821.98px;width:30px;text-align:center;color:#1E1E1E;">38</div>
<div style="left:0px;top:862px;width:28px;height:1px;background:linear-gradient(90deg,#DDDDDD,#9B9B9B);"></div>
<div class="t " style="left:-1.00px;top:843.98px;width:30px;text-align:center;color:#1E1E1E;">39</div>
<div style="left:0px;top:884px;width:28px;height:1px;background:linear-gradient(90deg,#DDDDDD,#9B9B9B);"></div>
<div class="t " style="left:-1.00px;top:864.98px;width:30px;text-align:center;color:#1E1E1E;">40</div>
<div class="t " style="left:-1.00px;top:886.98px;width:30px;text-align:center;color:#1E1E1E;">41</div>
</div>
<div id="sel">
<div style="left:27px;top:25px;width:35px;height:2px;background:#217346;"></div>
<div style="left:27px;top:25px;width:2px;height:24px;background:#217346;"></div>
<div style="left:60px;top:25px;width:2px;height:19px;background:#217346;"></div>
<div style="left:27px;top:47px;width:30px;height:2px;background:#217346;"></div>
<div style="left:57px;top:44px;width:7px;height:7px;background:#fff;"></div>
<div style="left:58px;top:45px;width:5px;height:5px;background:#217346;"></div>
</div>
<div id="ch">
<div style="left:1894px;top:27px;width:1px;height:880px;background:#9B9B9B;"></div>
<div style="left:1895px;top:0px;width:26px;height:907px;background:#E6E6E6;"></div>
<div style="left:1898px;top:27px;width:19px;height:861px;background:#F3F3F3;"></div>
<div style="left:1898px;top:8px;width:19px;height:19px;box-sizing:border-box;border:1px solid #ABABAB;background:#fff;"></div>
<svg style="left:1902px;top:13px" width="11" height="7" viewBox="0 0 11 7"><path d="M0.8 6 L10.2 6 L5.5 0.8 Z" fill="#333"/></svg>
<div style="left:1898px;top:26px;width:19px;height:216px;box-sizing:border-box;border:1px solid #8C8C8C;background:#fff;"></div>
<div style="left:0px;top:906px;width:1921px;height:32px;background:#E6E6E6;"></div>
<div style="left:0px;top:906px;width:1895px;height:1px;background:#ABABAB;"></div>
<div style="left:0px;top:938px;width:1921px;height:1px;background:#CFCFCF;"></div>
<div style="left:0px;top:939px;width:1921px;height:26px;background:#F3F3F3;"></div>
<div style="left:0px;top:965px;width:1921px;height:1px;background:#6E6A55;"></div>
<div style="left:0px;top:965px;width:39px;height:1px;background:#B9AF92;"></div>
<div style="left:1920px;top:0px;width:1px;height:966px;background:#000;"></div>
<div style="left:1898px;top:888px;width:19px;height:19px;box-sizing:border-box;border:1px solid #ABABAB;background:#fff;"></div>
<svg style="left:1902px;top:895px" width="11" height="7" viewBox="0 0 11 7"><path d="M0.8 1 L10.2 1 L5.5 6.2 Z" fill="#333"/></svg>
<svg style="left:28px;top:916px" width="10" height="14" viewBox="0 0 10 14"><path d="M7 2 L7 11.5 L1.5 6.75 Z" fill="#C6C6C6"/></svg>
<svg style="left:59px;top:916px" width="10" height="14" viewBox="0 0 10 14"><path d="M2.75 1 L2.75 12.5 L8.2 6.75 Z" fill="#217346"/></svg>
<div style="left:112px;top:910px;width:1px;height:24px;background:#ABABAB;"></div>
<div style="left:210px;top:910px;width:1px;height:24px;background:#ABABAB;"></div>
<div style="left:305px;top:910px;width:1px;height:24px;background:#ABABAB;"></div>
<div style="left:395px;top:910px;width:1px;height:24px;background:#ABABAB;"></div>
<div style="left:510px;top:910px;width:1px;height:24px;background:#ABABAB;"></div>
<div style="left:786px;top:910px;width:1px;height:24px;background:#ABABAB;"></div>
<div style="left:874px;top:910px;width:1px;height:24px;background:#ABABAB;"></div>
<div style="left:981px;top:910px;width:1px;height:24px;background:#ABABAB;"></div>
<div style="left:1069px;top:910px;width:1px;height:24px;background:#ABABAB;"></div>
<div style="left:627px;top:907px;width:75px;height:28px;background:#fff;"></div>
<div style="left:627px;top:933px;width:75px;height:2px;background:#217346;"></div>
<div class="t " style="left:125.50px;top:912.11px;width:160px;text-align:left;color:#444;font-size:17px;letter-spacing:-0.05px;">Welcome</div>
<div class="t " style="left:223.00px;top:912.11px;width:160px;text-align:left;color:#444;font-size:17px;letter-spacing:0.14px;">Contents</div>
<div class="t " style="left:319.00px;top:912.11px;width:160px;text-align:left;color:#444;font-size:17px;letter-spacing:-0.06px;">Settings</div>
<div class="t " style="left:410.00px;top:912.11px;width:160px;text-align:left;color:#444;font-size:17px;letter-spacing:-0.31px;">Summary_f</div>
<div class="t " style="left:524.00px;top:912.11px;width:160px;text-align:left;color:#444;font-size:17px;letter-spacing:-0.49px;">Summary_a</div>
<div class="t b" style="left:640.00px;top:912.11px;width:160px;text-align:left;color:#217346;font-size:17px;letter-spacing:-0.30px;">Inputs</div>
<div class="t " style="left:714.50px;top:912.11px;width:160px;text-align:left;color:#444;font-size:17px;letter-spacing:-0.86px;">Capex_i</div>
<div class="t " style="left:800.50px;top:912.11px;width:160px;text-align:left;color:#444;font-size:17px;letter-spacing:-0.81px;">Services</div>
<div class="t " style="left:887.50px;top:912.11px;width:160px;text-align:left;color:#444;font-size:17px;letter-spacing:-0.32px;">Economics</div>
<div class="t " style="left:994.25px;top:912.11px;width:160px;text-align:left;color:#444;font-size:17px;letter-spacing:-0.85px;">Capex_c</div>
<div style="left:1082px;top:924px;width:2px;height:2px;background:#0E5C2F;"></div>
<div style="left:1087px;top:924px;width:2px;height:2px;background:#0E5C2F;"></div>
<div style="left:1092px;top:924px;width:2px;height:2px;background:#0E5C2F;"></div>
<svg style="left:1109px;top:912px" width="22" height="22" viewBox="0 0 22 22"><circle cx="11" cy="11" r="9.4" fill="none" stroke="#6A6A6A" stroke-width="1.2"/><path d="M6 11 H16 M11 6.2 V15.8" stroke="#777" stroke-width="2"/></svg>
<div style="left:1150px;top:916px;width:3px;height:3px;background:#ABABAB;"></div>
<div style="left:1150px;top:921px;width:3px;height:3px;background:#ABABAB;"></div>
<div style="left:1150px;top:926px;width:3px;height:3px;background:#ABABAB;"></div>
<div style="left:1171px;top:913px;width:724px;height:19px;background:#F3F3F3;"></div>
<div style="left:1170px;top:913px;width:19px;height:19px;box-sizing:border-box;border:1px solid #ABABAB;background:#fff;"></div>
<svg style="left:1175px;top:917px" width="7" height="11" viewBox="0 0 7 11"><path d="M6 0.8 L6 10.2 L0.8 5.5 Z" fill="#111"/></svg>
<div style="left:1189px;top:913px;width:525px;height:19px;box-sizing:border-box;border:1px solid #8C8C8C;background:#fff;"></div>
<div style="left:1876px;top:913px;width:19px;height:19px;box-sizing:border-box;border:1px solid #ABABAB;background:#fff;"></div>
<svg style="left:1883px;top:917px" width="7" height="11" viewBox="0 0 7 11"><path d="M1 0.8 L1 10.2 L6.2 5.5 Z" fill="#111"/></svg>
<div class="t " style="left:14.50px;top:943.74px;width:80px;text-align:left;color:#333;font-size:12.3px;">Ready</div>
<div class="t " style="left:71.00px;top:943.74px;width:80px;text-align:left;color:#333;font-size:12.3px;">Calculate</div>
<div class="t b" style="left:211.00px;top:943.60px;width:200px;text-align:left;color:#262626;font-size:12.7px;">Accessibility: Investigate</div>
<div class="t " style="left:1437.50px;top:943.63px;width:120px;text-align:left;color:#333;font-size:12.6px;">Display Settings</div>
<div class="t " style="left:1884.00px;top:943.74px;width:40px;text-align:left;color:#333;font-size:12.3px;">80%</div>
<svg style="left:149px;top:943px" width="18" height="18" viewBox="0 0 18 18">
<rect x="2.5" y="2.5" width="13" height="13" fill="none" stroke="#5A5A5A" stroke-width="1"/>
<rect x="9" y="2" width="7" height="3.6" fill="#5A5A5A"/>
<circle cx="4.4" cy="4.4" r="4.3" fill="#F3F3F3"/><circle cx="4.4" cy="4.4" r="3.5" fill="#5A5A5A"/>
<path d="M5 7.5 H7 M8 7.5 H10 M11 7.5 H13 M5 10.5 H7 M8 10.5 H10 M11 10.5 H13 M5 13.5 H7 M8 13.5 H10 M11 13.5 H13" stroke="#5A5A5A" stroke-width="1"/></svg>
<svg style="left:187px;top:942px" width="24" height="22" viewBox="0 0 24 22">
<path d="M7.8 3 A7.4 7.5 0 0 0 8.8 17.8" fill="none" stroke="#444" stroke-width="1.3" stroke-dasharray="3.4 1.5"/>
<path d="M9.6 2.1 V10 M7.4 8.2 L9.6 10.4 L11.8 8.2" fill="none" stroke="#555" stroke-width="1"/>
<path d="M11.5 8.4 H17.7 M15.7 6.3 L17.8 8.4 L15.7 10.5" fill="none" stroke="#555" stroke-width="1"/>
<path d="M11.6 12.2 L20.3 19.3 M19.8 12.4 L11.8 19.3" stroke="#444" stroke-width="1.8" stroke-linecap="round"/></svg>
<svg style="left:1415px;top:942px" width="22" height="21" viewBox="0 0 22 21">
<rect x="1" y="1.5" width="19" height="12.5" rx="1.5" fill="#505050"/>
<rect x="5" y="16.5" width="6" height="1.6" fill="#505050"/>
<circle cx="15" cy="14" r="6" fill="#F3F3F3"/>
<circle cx="15" cy="14" r="3.4" fill="none" stroke="#505050" stroke-width="2.6" stroke-dasharray="2.2 1.36"/>
<circle cx="15" cy="14" r="3.2" fill="none" stroke="#505050" stroke-width="1.6"/></svg>
<div style="left:1554px;top:939px;width:50px;height:26px;background:#C6C6C6;"></div>
<svg style="left:1571px;top:944px" width="16" height="16" viewBox="0 0 16 16">
<rect x="0.5" y="0.5" width="15" height="15" fill="none" stroke="#6A6A6A" stroke-width="1"/>
<path d="M5.5 0 V16 M10.5 0 V16 M0 5.5 H16 M0 10.5 H16" stroke="#6A6A6A" stroke-width="1"/></svg>
<svg style="left:1620px;top:944px" width="17" height="15" viewBox="0 0 17 15">
<rect x="0.5" y="0.5" width="16" height="14" fill="none" stroke="#6A6A6A" stroke-width="1"/>
<rect x="4.5" y="3.5" width="8" height="9" fill="none" stroke="#6A6A6A" stroke-width="1"/>
<path d="M6 6.5 H11 M6 8.5 H11 M6 10.5 H11" stroke="#6A6A6A" stroke-width="0.9"/></svg>
<svg style="left:1670px;top:944px" width="17" height="16" viewBox="0 0 17 16">
<rect x="0.5" y="0.5" width="16" height="15" fill="none" stroke="#6A6A6A" stroke-width="1"/>
<path d="M5.5 0.5 V9 M0.5 8.5 H11.5 M11.5 0.5 V9" fill="none" stroke="#8A8A8A" stroke-width="1"/></svg>
<div style="left:1711px;top:951px;width:10px;height:1px;background:#444;"></div>
<div style="left:1727px;top:952px;width:125px;height:1px;background:#5A5A5A;"></div>
<div style="left:1789px;top:949px;width:1px;height:7px;background:#5A5A5A;"></div>
<div style="left:1774px;top:945px;width:6px;height:14px;background:#444;"></div>
<div style="left:1858px;top:951px;width:10px;height:1px;background:#444;"></div>
<div style="left:1862px;top:947px;width:1px;height:10px;background:#444;"></div>
</div>
</body></html>
